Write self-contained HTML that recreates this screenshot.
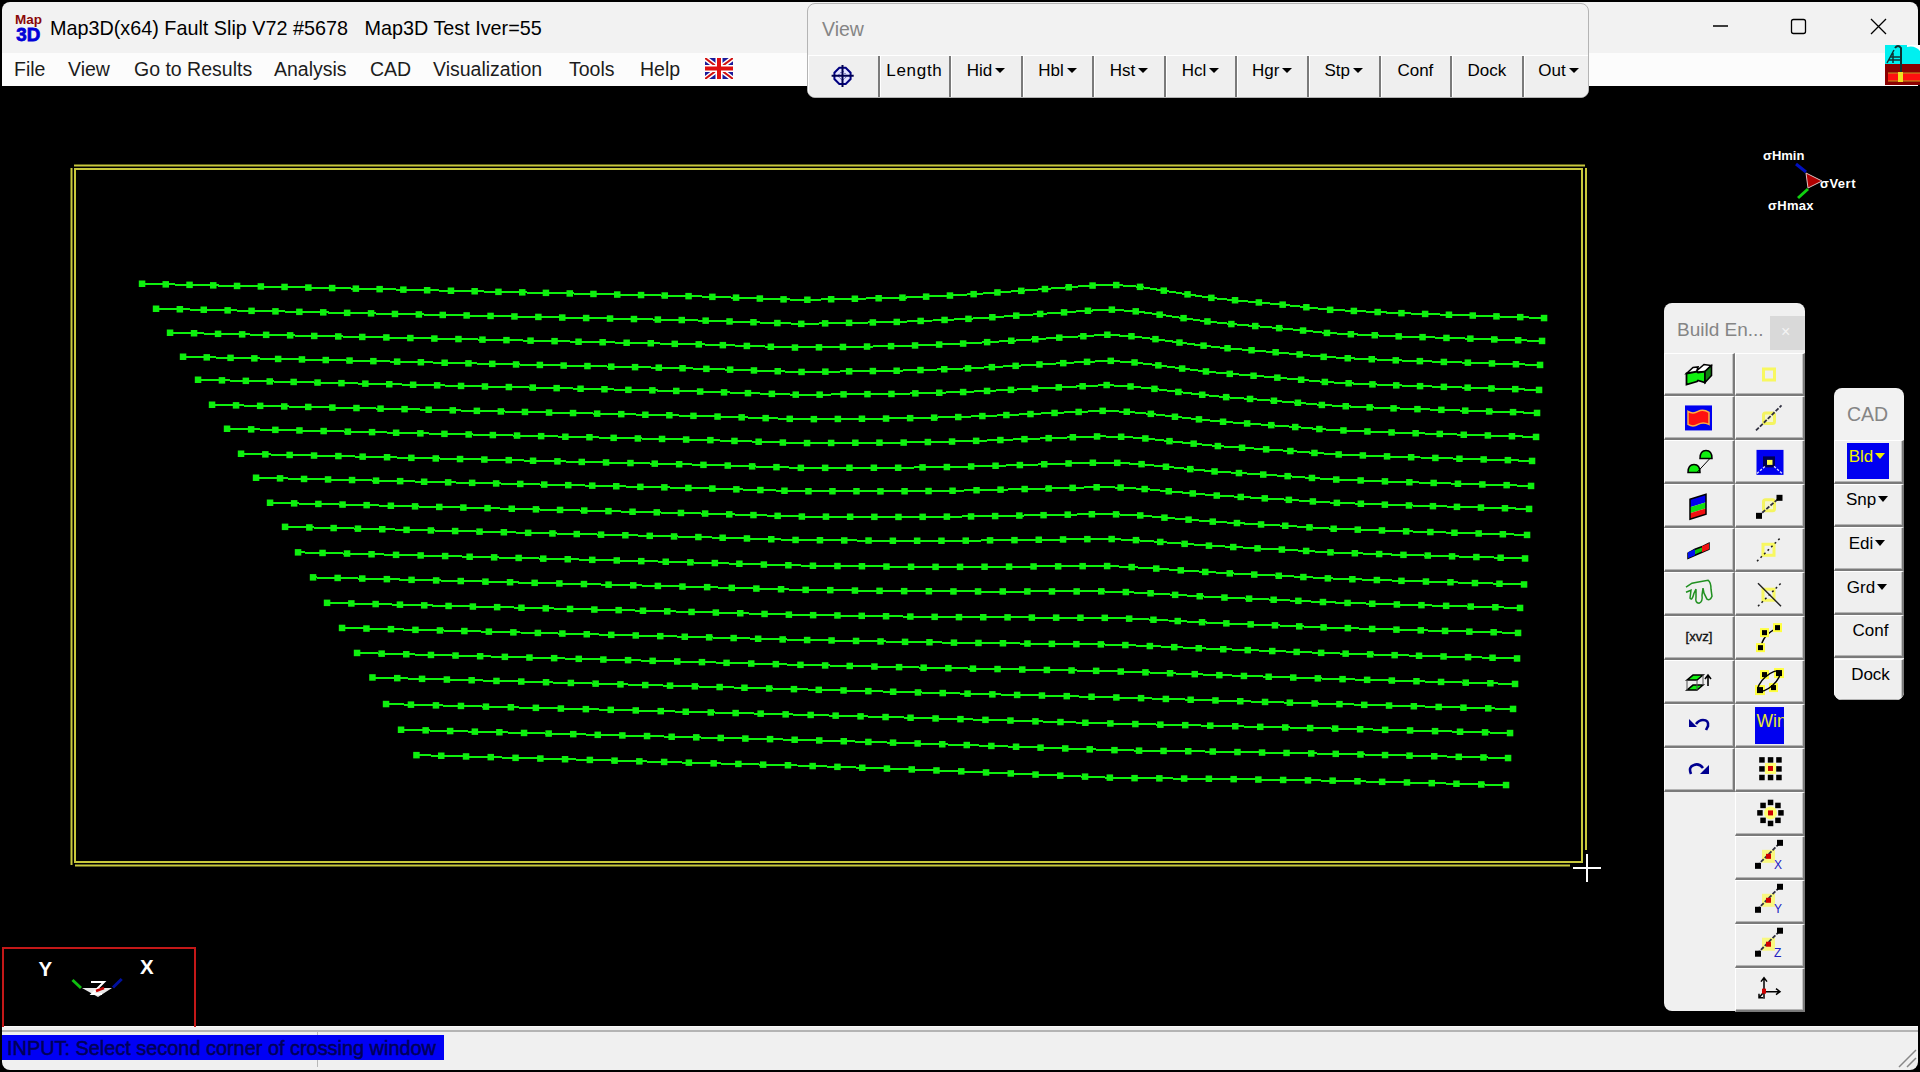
<!DOCTYPE html><html><head><meta charset="utf-8"><style>
*{margin:0;padding:0;box-sizing:border-box}
html,body{width:1920px;height:1072px;overflow:hidden;background:#000}
body{position:relative;font-family:"Liberation Sans", sans-serif}
.abs{position:absolute}
.t{position:absolute;white-space:nowrap;line-height:1}
.vb{position:absolute;top:55px;height:42px;width:71px;background:#efefef;border-top:1px solid #fff;border-left:1px solid #fff}
.vb:after{content:'';position:absolute;right:0;top:0;width:2px;height:100%;background:#7a7a7a}
.bb{position:absolute;width:70px;height:44px;background:#efefef;border-top:1px solid #fff;border-left:1px solid #fff;border-right:2px solid #7a7a7a;border-bottom:2px solid #7a7a7a;box-shadow:inset 0 -1px 0 #b4b4b4, inset -1px 0 0 #c4c4c4}
.tri{display:inline-block;width:0;height:0;border-left:5.75px solid transparent;border-right:5.75px solid transparent;border-top:6px solid #000;vertical-align:3px;margin-left:2px}
.trv{display:inline-block;width:0;height:0;border-left:5px solid transparent;border-right:5px solid transparent;border-top:5.5px solid #000;vertical-align:3px;margin-left:3px}
</style></head><body><div class="abs" style="left:2px;top:2px;width:1916px;height:1068px;border-radius:8px;background:#000;overflow:hidden"><div class="abs" style="left:0;top:0;width:1916px;height:51px;background:#f2f2f2"></div><div class="abs" style="left:0;top:51px;width:1916px;height:33px;background:#fcfcfc"></div><div class="abs" style="left:0;top:1024px;width:1916px;height:44px;background:#f0f0f0;border-top:1px solid #fafafa"></div><div class="abs" style="left:0;top:1028px;width:1916px;height:2px;background:#b4b4b4"></div></div><svg class="abs" style="left:0;top:0" width="60" height="50" font-family="Liberation Sans" font-weight="bold"><text x="15" y="23.7" font-size="13.7" fill="#8a0808" textLength="27" lengthAdjust="spacingAndGlyphs">Map</text><text x="16.3" y="40.5" font-size="19" fill="#0000d8" textLength="24" lengthAdjust="spacingAndGlyphs" stroke="#0000d8" stroke-width="0.8">3D</text></svg><div class="t" style="left:50.0px;top:18.8px;font-size:19.8px;color:#000;">Map3D(x64) Fault Slip V72 #5678&nbsp;&nbsp;&nbsp;Map3D Test Iver=55</div><svg class="abs" style="left:1690px;top:10px" width="220" height="36"><path d="M23,16 H38" stroke="#000" stroke-width="1.5"/><rect x="101.5" y="9.5" width="14" height="14" rx="2" fill="none" stroke="#000" stroke-width="1.3"/><path d="M181,9 L196,24 M196,9 L181,24" stroke="#000" stroke-width="1.3"/></svg><div class="t" style="left:14.0px;top:60.2px;font-size:19.5px;color:#1c1c1c;">File</div><div class="t" style="left:68.0px;top:60.2px;font-size:19.5px;color:#1c1c1c;">View</div><div class="t" style="left:134.0px;top:60.2px;font-size:19.5px;color:#1c1c1c;">Go to Results</div><div class="t" style="left:274.0px;top:60.2px;font-size:19.5px;color:#1c1c1c;">Analysis</div><div class="t" style="left:370.0px;top:60.2px;font-size:19.5px;color:#1c1c1c;">CAD</div><div class="t" style="left:433.0px;top:60.2px;font-size:19.5px;color:#1c1c1c;">Visualization</div><div class="t" style="left:569.0px;top:60.2px;font-size:19.5px;color:#1c1c1c;">Tools</div><div class="t" style="left:640.0px;top:60.2px;font-size:19.5px;color:#1c1c1c;">Help</div><svg class="abs" style="left:705px;top:58px" width="28" height="21" viewBox="0 0 28 21"><rect width="28" height="21" fill="#1a1a9a"/><path d="M0,0 L28,21 M28,0 L0,21" stroke="#fff" stroke-width="5"/><path d="M0,0 L28,21 M28,0 L0,21" stroke="#d01010" stroke-width="2"/><path d="M14,0 V21 M0,10.5 H28" stroke="#fff" stroke-width="7"/><path d="M14,0 V21 M0,10.5 H28" stroke="#e01010" stroke-width="4"/></svg><svg class="abs" style="left:1885px;top:45px" width="35" height="40" viewBox="0 0 35 40"><rect x="0" y="0" width="35" height="19" fill="#00f0f0"/><path d="M22,2 Q30,0 35,6 V0 H22Z" fill="#ffffff"/><rect x="0" y="19" width="35" height="21" fill="#8b0000"/><rect x="3" y="28" width="32" height="8" fill="#ff1010"/><path d="M3,28 H35 M3,36 H35" stroke="#c0a020" stroke-width="1"/><path d="M2,18 L9,5 M8,8 V18 M5,12 H15 M4,15 H15" stroke="#103030" stroke-width="1.5" fill="none"/><path d="M10,3 Q13,-1 16,3 V27" stroke="#103030" stroke-width="2" fill="none"/><rect x="13" y="27" width="5" height="10" fill="#f0e020"/></svg><svg width="1920" height="1072" style="position:absolute;left:0;top:0"><g fill="none" stroke="#0ef00e" stroke-width="2" shape-rendering="crispEdges"><polyline points="142.0,283.8 165.8,284.3 189.5,284.8 213.3,285.4 237.1,285.9 260.8,286.5 284.6,287.0 308.3,287.5 332.1,288.1 355.9,288.6 379.6,289.1 403.4,289.7 427.2,290.2 450.9,290.8 474.7,291.3 498.4,291.8 522.2,292.4 546.0,292.9 569.7,293.4 593.5,294.0 617.3,294.5 641.0,295.0 664.8,295.6 688.5,296.1 712.3,296.8 736.1,297.7 759.8,298.5 783.6,299.4 807.4,299.8 831.1,299.3 854.9,298.8 878.6,298.2 902.4,297.7 926.2,296.6 949.9,295.5 973.7,294.1 997.5,292.5 1021.2,290.8 1045.0,289.0 1068.7,287.2 1092.5,285.5 1116.3,285.0 1140.0,286.8 1163.8,290.7 1187.6,294.3 1211.3,297.9 1235.1,300.3 1258.8,302.5 1282.6,304.7 1306.4,307.2 1330.1,309.8 1353.9,310.9 1377.7,312.1 1401.4,313.2 1425.2,314.0 1448.9,314.8 1472.7,315.6 1496.5,316.4 1520.2,317.2 1544.0,318.0"/><polyline points="156.0,308.8 179.9,309.3 203.8,309.8 227.7,310.3 251.6,310.8 275.5,311.3 299.4,311.8 323.3,312.4 347.2,312.9 371.1,313.4 395.0,313.9 418.9,314.4 442.8,314.9 466.7,315.5 490.6,316.0 514.4,316.5 538.3,317.0 562.2,317.5 586.1,318.0 610.0,318.5 633.9,319.1 657.8,319.6 681.7,320.1 705.6,320.7 729.5,321.5 753.4,322.3 777.3,323.1 801.2,323.8 825.1,323.4 849.0,322.9 872.9,322.4 896.8,321.9 920.7,321.0 944.6,320.0 968.5,318.8 992.4,317.3 1016.3,315.7 1040.2,314.0 1064.1,312.3 1088.0,310.7 1111.9,309.7 1135.8,311.3 1159.7,314.6 1183.6,318.2 1207.4,321.5 1231.3,324.0 1255.2,326.1 1279.1,328.1 1303.0,330.5 1326.9,333.0 1350.8,334.2 1374.7,335.3 1398.6,336.4 1422.5,337.1 1446.4,337.9 1470.3,338.7 1494.2,339.4 1518.1,340.2 1542.0,341.0"/><polyline points="170.0,332.8 194.0,333.3 218.1,333.8 242.1,334.3 266.1,334.9 290.2,335.4 314.2,335.9 338.2,336.4 362.3,337.0 386.3,337.5 410.4,338.0 434.4,338.5 458.4,339.1 482.5,339.6 506.5,340.1 530.5,340.7 554.6,341.2 578.6,341.7 602.6,342.2 626.7,342.8 650.7,343.3 674.7,343.8 698.8,344.3 722.8,345.1 746.8,345.9 770.9,346.7 794.9,347.5 818.9,347.4 843.0,347.0 867.0,346.6 891.1,346.2 915.1,345.4 939.1,344.6 963.2,343.6 987.2,342.2 1011.2,340.8 1035.3,339.2 1059.3,337.7 1083.3,336.2 1107.4,334.7 1131.4,336.3 1155.4,339.1 1179.5,342.5 1203.5,345.7 1227.5,348.3 1251.6,350.3 1275.6,352.3 1299.6,354.5 1323.7,356.8 1347.7,358.2 1371.8,359.3 1395.8,360.3 1419.8,361.1 1443.9,361.9 1467.9,362.7 1491.9,363.4 1516.0,364.2 1540.0,365.0"/><polyline points="183.0,356.8 206.8,357.3 230.6,357.8 254.4,358.4 278.2,358.9 301.9,359.5 325.7,360.0 349.5,360.6 373.3,361.1 397.1,361.7 420.9,362.2 444.7,362.8 468.5,363.3 492.3,363.9 516.1,364.4 539.8,365.0 563.6,365.5 587.4,366.1 611.2,366.6 635.0,367.1 658.8,367.7 682.6,368.2 706.4,368.9 730.2,369.7 753.9,370.5 777.7,371.3 801.5,372.0 825.3,371.7 849.1,371.4 872.9,371.0 896.7,370.7 920.5,370.0 944.3,369.3 968.1,368.3 991.8,367.1 1015.6,365.8 1039.4,364.5 1063.2,363.1 1087.0,361.8 1110.8,360.9 1134.6,362.5 1158.4,365.3 1182.2,368.5 1205.9,371.5 1229.7,373.8 1253.5,375.7 1277.3,377.6 1301.1,379.8 1324.9,382.0 1348.7,383.3 1372.5,384.3 1396.3,385.3 1420.1,386.1 1443.8,386.9 1467.6,387.7 1491.4,388.4 1515.2,389.2 1539.0,390.0"/><polyline points="198.0,379.8 221.9,380.3 245.8,380.9 269.7,381.4 293.6,382.0 317.6,382.6 341.5,383.1 365.4,383.7 389.3,384.2 413.2,384.8 437.1,385.3 461.0,385.9 484.9,386.5 508.8,387.0 532.8,387.6 556.7,388.1 580.6,388.7 604.5,389.3 628.4,389.8 652.3,390.4 676.2,390.9 700.1,391.5 724.0,392.3 747.9,393.1 771.9,393.9 795.8,394.7 819.7,394.6 843.6,394.4 867.5,394.2 891.4,393.9 915.3,393.4 939.2,392.7 963.1,392.0 987.1,390.9 1011.0,389.8 1034.9,388.6 1058.8,387.4 1082.7,386.2 1106.6,385.1 1130.5,386.4 1154.4,388.9 1178.3,391.9 1202.2,394.8 1226.2,397.2 1250.1,399.0 1274.0,400.8 1297.9,402.8 1321.8,404.9 1345.7,406.3 1369.6,407.3 1393.5,408.3 1417.4,409.1 1441.4,409.9 1465.3,410.7 1489.2,411.4 1513.1,412.2 1537.0,412.9"/><polyline points="212.0,404.8 236.1,405.3 260.1,405.9 284.2,406.4 308.3,407.0 332.4,407.5 356.4,408.1 380.5,408.6 404.6,409.2 428.7,409.7 452.7,410.3 476.8,410.9 500.9,411.4 524.9,412.0 549.0,412.5 573.1,413.1 597.2,413.6 621.2,414.2 645.3,414.7 669.4,415.3 693.5,415.8 717.5,416.6 741.6,417.3 765.7,418.1 789.7,418.9 813.8,419.1 837.9,418.9 862.0,418.7 886.0,418.5 910.1,418.2 934.2,417.6 958.3,417.0 982.3,416.1 1006.4,415.1 1030.5,414.0 1054.5,412.9 1078.6,411.9 1102.7,410.9 1126.8,411.8 1150.8,413.9 1174.9,416.7 1199.0,419.4 1223.1,421.8 1247.1,423.5 1271.2,425.2 1295.3,427.0 1319.3,429.1 1343.4,430.5 1367.5,431.4 1391.6,432.4 1415.6,433.2 1439.7,434.0 1463.8,434.7 1487.9,435.5 1511.9,436.2 1536.0,436.9"/><polyline points="227.0,428.8 251.2,429.3 275.3,429.9 299.5,430.5 323.7,431.0 347.8,431.6 372.0,432.2 396.2,432.7 420.3,433.3 444.5,433.9 468.7,434.4 492.8,435.0 517.0,435.6 541.2,436.1 565.3,436.7 589.5,437.3 613.7,437.8 637.8,438.4 662.0,439.0 686.2,439.5 710.3,440.2 734.5,441.0 758.7,441.7 782.8,442.5 807.0,443.0 831.2,442.9 855.3,442.8 879.5,442.7 903.7,442.5 927.8,442.0 952.0,441.6 976.2,440.9 1000.3,440.0 1024.5,439.1 1048.7,438.2 1072.8,437.3 1097.0,436.4 1121.2,436.7 1145.3,438.4 1169.5,441.1 1193.7,443.7 1217.8,446.1 1242.0,447.7 1266.2,449.3 1290.3,451.0 1314.5,452.9 1338.7,454.5 1362.8,455.4 1387.0,456.4 1411.2,457.2 1435.3,458.0 1459.5,458.7 1483.7,459.4 1507.8,460.2 1532.0,460.9"/><polyline points="241.0,453.8 265.3,454.4 289.7,454.9 314.0,455.5 338.4,456.1 362.7,456.7 387.0,457.3 411.4,457.8 435.7,458.4 460.1,459.0 484.4,459.6 508.7,460.2 533.1,460.7 557.4,461.3 581.8,461.9 606.1,462.5 630.4,463.1 654.8,463.6 679.1,464.2 703.5,464.8 727.8,465.6 752.1,466.4 776.5,467.1 800.8,467.9 825.2,467.8 849.5,467.8 873.8,467.7 898.2,467.7 922.5,467.4 946.8,467.0 971.2,466.5 995.5,465.8 1019.9,465.1 1044.2,464.3 1068.5,463.5 1092.9,462.8 1117.2,462.8 1141.6,464.2 1165.9,466.7 1190.2,469.1 1214.6,471.5 1238.9,473.0 1263.3,474.6 1287.6,476.2 1311.9,478.0 1336.3,479.5 1360.6,480.5 1385.0,481.4 1409.3,482.2 1433.6,483.0 1458.0,483.7 1482.3,484.5 1506.7,485.2 1531.0,485.9"/><polyline points="256.0,477.8 280.0,478.3 304.0,478.9 328.1,479.5 352.1,480.0 376.1,480.6 400.1,481.2 424.1,481.7 448.2,482.3 472.2,482.9 496.2,483.4 520.2,484.0 544.2,484.6 568.2,485.1 592.3,485.7 616.3,486.3 640.3,486.8 664.3,487.4 688.3,487.9 712.4,488.6 736.4,489.3 760.4,490.0 784.4,490.8 808.4,491.3 832.5,491.3 856.5,491.3 880.5,491.3 904.5,491.3 928.5,491.0 952.5,490.7 976.6,490.3 1000.6,489.7 1024.6,489.1 1048.6,488.4 1072.6,487.8 1096.7,487.2 1120.7,487.6 1144.7,489.0 1168.7,491.3 1192.7,493.4 1216.8,495.5 1240.8,496.9 1264.8,498.4 1288.8,499.8 1312.8,501.5 1336.8,502.9 1360.9,503.7 1384.9,504.6 1408.9,505.4 1432.9,506.1 1456.9,506.8 1481.0,507.5 1505.0,508.2 1529.0,508.9"/><polyline points="270.0,502.8 294.2,503.4 318.3,504.0 342.5,504.6 366.7,505.2 390.9,505.8 415.0,506.4 439.2,507.0 463.4,507.6 487.6,508.2 511.7,508.8 535.9,509.4 560.1,510.0 584.2,510.6 608.4,511.2 632.6,511.8 656.8,512.4 680.9,513.0 705.1,513.6 729.3,514.3 753.5,515.1 777.6,515.8 801.8,516.5 826.0,516.6 850.2,516.7 874.3,516.8 898.5,517.0 922.7,516.8 946.8,516.7 971.0,516.4 995.2,516.0 1019.4,515.6 1043.5,515.1 1067.7,514.7 1091.9,514.2 1116.1,514.3 1140.2,515.5 1164.4,517.6 1188.6,519.7 1212.8,521.6 1236.9,523.1 1261.1,524.4 1285.3,525.8 1309.4,527.3 1333.6,528.8 1357.8,529.6 1382.0,530.5 1406.1,531.3 1430.3,532.0 1454.5,532.8 1478.7,533.5 1502.8,534.2 1527.0,534.9"/><polyline points="285.0,526.8 309.3,527.4 333.6,528.0 357.9,528.6 382.3,529.2 406.6,529.8 430.9,530.4 455.2,531.0 479.5,531.6 503.8,532.2 528.1,532.8 552.5,533.4 576.8,534.0 601.1,534.6 625.4,535.2 649.7,535.8 674.0,536.4 698.3,537.1 722.6,537.8 747.0,538.5 771.3,539.2 795.6,540.0 819.9,540.2 844.2,540.4 868.5,540.6 892.8,540.8 917.2,540.8 941.5,540.8 965.8,540.7 990.1,540.4 1014.4,540.1 1038.7,539.8 1063.0,539.5 1087.4,539.2 1111.7,539.1 1136.0,540.2 1160.3,542.0 1184.6,543.8 1208.9,545.6 1233.2,547.0 1257.5,548.3 1281.9,549.6 1306.2,551.0 1330.5,552.4 1354.8,553.2 1379.1,554.1 1403.4,554.9 1427.7,555.6 1452.1,556.3 1476.4,557.0 1500.7,557.7 1525.0,558.4"/><polyline points="298.0,552.3 322.5,553.0 347.0,553.6 371.6,554.2 396.1,554.8 420.6,555.5 445.1,556.1 469.6,556.7 494.2,557.4 518.7,558.0 543.2,558.6 567.7,559.2 592.2,559.9 616.8,560.5 641.3,561.1 665.8,561.7 690.3,562.4 714.8,563.1 739.4,563.8 763.9,564.5 788.4,565.3 812.9,565.7 837.4,566.0 862.0,566.3 886.5,566.5 911.0,566.7 935.5,566.8 960.0,566.9 984.6,566.8 1009.1,566.7 1033.6,566.5 1058.1,566.3 1082.6,566.2 1107.2,566.0 1131.7,567.1 1156.2,568.6 1180.7,570.3 1205.2,571.9 1229.8,573.3 1254.3,574.5 1278.8,575.7 1303.3,577.0 1327.8,578.3 1352.4,579.2 1376.9,580.0 1401.4,580.8 1425.9,581.6 1450.4,582.3 1475.0,583.0 1499.5,583.7 1524.0,584.4"/><polyline points="313.0,577.4 337.6,578.0 362.3,578.6 386.9,579.2 411.5,579.8 436.2,580.4 460.8,581.0 485.4,581.6 510.1,582.3 534.7,582.9 559.3,583.5 584.0,584.1 608.6,584.7 633.2,585.3 657.9,585.9 682.5,586.5 707.1,587.2 731.8,587.9 756.4,588.6 781.0,589.3 805.7,589.9 830.3,590.2 854.9,590.5 879.6,590.8 904.2,591.1 928.8,591.3 953.4,591.4 978.1,591.5 1002.7,591.5 1027.3,591.5 1052.0,591.4 1076.6,591.4 1101.2,591.4 1125.9,592.1 1150.5,593.3 1175.1,594.8 1199.8,596.3 1224.4,597.6 1249.0,598.7 1273.7,599.7 1298.3,600.9 1322.9,602.1 1347.6,602.9 1372.2,603.7 1396.8,604.5 1421.5,605.2 1446.1,605.9 1470.7,606.6 1495.4,607.3 1520.0,607.9"/><polyline points="327.0,602.9 351.3,603.5 375.6,604.1 399.9,604.7 424.2,605.3 448.5,605.9 472.8,606.5 497.1,607.1 521.4,607.7 545.8,608.3 570.1,608.9 594.4,609.5 618.7,610.1 643.0,610.7 667.3,611.3 691.6,611.9 715.9,612.6 740.2,613.3 764.5,613.9 788.8,614.6 813.1,615.1 837.4,615.5 861.7,615.9 886.0,616.3 910.3,616.6 934.7,616.8 959.0,617.1 983.3,617.3 1007.6,617.4 1031.9,617.5 1056.2,617.6 1080.5,617.7 1104.8,617.9 1129.1,618.6 1153.4,619.7 1177.7,621.0 1202.0,622.3 1226.3,623.4 1250.6,624.4 1274.9,625.3 1299.2,626.3 1323.6,627.4 1347.9,628.2 1372.2,628.9 1396.5,629.6 1420.8,630.3 1445.1,631.0 1469.4,631.6 1493.7,632.3 1518.0,632.9"/><polyline points="342.0,627.9 366.5,628.5 391.0,629.2 415.4,629.8 439.9,630.4 464.4,631.1 488.9,631.7 513.4,632.3 537.8,633.0 562.3,633.6 586.8,634.2 611.3,634.8 635.8,635.5 660.2,636.1 684.7,636.7 709.2,637.4 733.7,638.1 758.1,638.7 782.6,639.4 807.1,640.0 831.6,640.5 856.1,641.0 880.5,641.4 905.0,641.9 929.5,642.3 954.0,642.7 978.5,643.0 1002.9,643.3 1027.4,643.6 1051.9,643.8 1076.4,644.1 1100.9,644.4 1125.3,645.1 1149.8,646.0 1174.3,647.1 1198.8,648.2 1223.2,649.2 1247.7,650.1 1272.2,651.0 1296.7,651.9 1321.2,652.9 1345.6,653.7 1370.1,654.4 1394.6,655.1 1419.1,655.8 1443.6,656.5 1468.0,657.1 1492.5,657.8 1517.0,658.5"/><polyline points="357.0,652.9 381.6,653.6 406.3,654.3 430.9,654.9 455.6,655.6 480.2,656.2 504.8,656.9 529.5,657.5 554.1,658.2 578.7,658.9 603.4,659.5 628.0,660.2 652.7,660.8 677.3,661.5 701.9,662.1 726.6,662.8 751.2,663.5 775.9,664.2 800.5,664.9 825.1,665.4 849.8,666.0 874.4,666.6 899.0,667.1 923.7,667.6 948.3,668.1 973.0,668.6 997.6,669.1 1022.2,669.5 1046.9,670.0 1071.5,670.4 1096.1,670.9 1120.8,671.5 1145.4,672.3 1170.1,673.3 1194.7,674.2 1219.3,675.1 1244.0,675.9 1268.6,676.7 1293.3,677.5 1317.9,678.4 1342.5,679.1 1367.2,679.9 1391.8,680.6 1416.4,681.3 1441.1,681.9 1465.7,682.6 1490.4,683.3 1515.0,684.0"/><polyline points="372.5,677.5 397.3,678.2 422.1,678.9 446.9,679.5 471.7,680.2 496.5,680.9 521.3,681.6 546.1,682.3 570.8,683.0 595.6,683.6 620.4,684.3 645.2,685.0 670.0,685.7 694.8,686.4 719.6,687.1 744.4,687.8 769.2,688.4 794.0,689.1 818.8,689.8 843.6,690.5 868.4,691.1 893.2,691.8 918.0,692.4 942.8,693.1 967.5,693.7 992.3,694.3 1017.1,694.9 1041.9,695.6 1066.7,696.2 1091.5,696.8 1116.3,697.5 1141.1,698.2 1165.9,698.9 1190.7,699.7 1215.5,700.5 1240.3,701.2 1265.1,701.9 1289.9,702.7 1314.7,703.4 1339.4,704.1 1364.2,704.8 1389.0,705.5 1413.8,706.2 1438.6,706.9 1463.4,707.6 1488.2,708.3 1513.0,709.0"/><polyline points="386.0,704.0 411.0,704.7 436.0,705.3 460.9,706.0 485.9,706.6 510.9,707.3 535.9,707.9 560.8,708.5 585.8,709.2 610.8,709.8 635.8,710.5 660.8,711.1 685.7,711.8 710.7,712.4 735.7,713.0 760.7,713.7 785.6,714.3 810.6,715.0 835.6,715.7 860.6,716.3 885.6,717.0 910.5,717.7 935.5,718.4 960.5,719.1 985.5,719.9 1010.4,720.6 1035.4,721.3 1060.4,722.0 1085.4,722.8 1110.4,723.5 1135.3,724.1 1160.3,724.6 1185.3,725.2 1210.3,725.7 1235.2,726.3 1260.2,726.9 1285.2,727.4 1310.2,728.0 1335.2,728.6 1360.1,729.2 1385.1,729.8 1410.1,730.5 1435.1,731.1 1460.0,731.7 1485.0,732.4 1510.0,733.0"/><polyline points="401.0,729.8 425.6,730.4 450.2,731.0 474.8,731.7 499.4,732.3 524.0,732.9 548.6,733.6 573.2,734.2 597.8,734.8 622.4,735.5 647.0,736.1 671.6,736.7 696.2,737.4 720.8,738.0 745.4,738.6 770.0,739.2 794.6,739.8 819.2,740.5 843.8,741.2 868.4,741.9 893.0,742.7 917.6,743.5 942.2,744.3 966.8,745.1 991.4,745.9 1016.0,746.8 1040.6,747.6 1065.2,748.5 1089.8,749.3 1114.4,750.1 1139.0,750.6 1163.6,750.9 1188.2,751.3 1212.8,751.6 1237.4,752.0 1262.0,752.5 1286.6,753.0 1311.2,753.4 1335.8,753.9 1360.4,754.4 1385.0,755.0 1409.6,755.6 1434.2,756.2 1458.8,756.8 1483.4,757.4 1508.0,758.0"/><polyline points="416.5,755.1 441.3,755.8 466.0,756.5 490.8,757.2 515.5,757.9 540.3,758.5 565.1,759.2 589.8,759.9 614.6,760.6 639.4,761.3 664.1,762.0 688.9,762.7 713.6,763.3 738.4,764.0 763.2,764.6 787.9,765.2 812.7,766.0 837.4,766.9 862.2,767.7 887.0,768.6 911.7,769.5 936.5,770.4 961.2,771.4 986.0,772.4 1010.8,773.5 1035.5,774.5 1060.3,775.6 1085.1,776.7 1109.8,777.7 1134.6,778.2 1159.3,778.4 1184.1,778.6 1208.9,778.8 1233.6,779.1 1258.4,779.5 1283.1,780.0 1307.9,780.3 1332.7,780.7 1357.4,781.3 1382.2,781.9 1407.0,782.5 1431.7,783.1 1456.5,783.8 1481.2,784.4 1506.0,785.1"/></g><g fill="#0ef00e"><rect x="138.8" y="280.5" width="6.5" height="6.5"/><rect x="162.5" y="281.1" width="6.5" height="6.5"/><rect x="186.3" y="281.6" width="6.5" height="6.5"/><rect x="210.0" y="282.1" width="6.5" height="6.5"/><rect x="233.8" y="282.7" width="6.5" height="6.5"/><rect x="257.6" y="283.2" width="6.5" height="6.5"/><rect x="281.3" y="283.7" width="6.5" height="6.5"/><rect x="305.1" y="284.3" width="6.5" height="6.5"/><rect x="328.9" y="284.8" width="6.5" height="6.5"/><rect x="352.6" y="285.4" width="6.5" height="6.5"/><rect x="376.4" y="285.9" width="6.5" height="6.5"/><rect x="400.1" y="286.4" width="6.5" height="6.5"/><rect x="423.9" y="287.0" width="6.5" height="6.5"/><rect x="447.7" y="287.5" width="6.5" height="6.5"/><rect x="471.4" y="288.0" width="6.5" height="6.5"/><rect x="495.2" y="288.6" width="6.5" height="6.5"/><rect x="519.0" y="289.1" width="6.5" height="6.5"/><rect x="542.7" y="289.6" width="6.5" height="6.5"/><rect x="566.5" y="290.2" width="6.5" height="6.5"/><rect x="590.2" y="290.7" width="6.5" height="6.5"/><rect x="614.0" y="291.3" width="6.5" height="6.5"/><rect x="637.8" y="291.8" width="6.5" height="6.5"/><rect x="661.5" y="292.3" width="6.5" height="6.5"/><rect x="685.3" y="292.9" width="6.5" height="6.5"/><rect x="709.1" y="293.6" width="6.5" height="6.5"/><rect x="732.8" y="294.4" width="6.5" height="6.5"/><rect x="756.6" y="295.3" width="6.5" height="6.5"/><rect x="780.3" y="296.1" width="6.5" height="6.5"/><rect x="804.1" y="296.5" width="6.5" height="6.5"/><rect x="827.9" y="296.0" width="6.5" height="6.5"/><rect x="851.6" y="295.5" width="6.5" height="6.5"/><rect x="875.4" y="295.0" width="6.5" height="6.5"/><rect x="899.2" y="294.4" width="6.5" height="6.5"/><rect x="922.9" y="293.4" width="6.5" height="6.5"/><rect x="946.7" y="292.3" width="6.5" height="6.5"/><rect x="970.4" y="290.9" width="6.5" height="6.5"/><rect x="994.2" y="289.2" width="6.5" height="6.5"/><rect x="1018.0" y="287.6" width="6.5" height="6.5"/><rect x="1041.7" y="285.8" width="6.5" height="6.5"/><rect x="1065.5" y="284.0" width="6.5" height="6.5"/><rect x="1089.3" y="282.3" width="6.5" height="6.5"/><rect x="1113.0" y="281.8" width="6.5" height="6.5"/><rect x="1136.8" y="283.6" width="6.5" height="6.5"/><rect x="1160.5" y="287.4" width="6.5" height="6.5"/><rect x="1184.3" y="291.1" width="6.5" height="6.5"/><rect x="1208.1" y="294.6" width="6.5" height="6.5"/><rect x="1231.8" y="297.0" width="6.5" height="6.5"/><rect x="1255.6" y="299.2" width="6.5" height="6.5"/><rect x="1279.4" y="301.4" width="6.5" height="6.5"/><rect x="1303.1" y="304.0" width="6.5" height="6.5"/><rect x="1326.9" y="306.6" width="6.5" height="6.5"/><rect x="1350.6" y="307.7" width="6.5" height="6.5"/><rect x="1374.4" y="308.8" width="6.5" height="6.5"/><rect x="1398.2" y="309.9" width="6.5" height="6.5"/><rect x="1421.9" y="310.7" width="6.5" height="6.5"/><rect x="1445.7" y="311.5" width="6.5" height="6.5"/><rect x="1469.5" y="312.3" width="6.5" height="6.5"/><rect x="1493.2" y="313.1" width="6.5" height="6.5"/><rect x="1517.0" y="313.9" width="6.5" height="6.5"/><rect x="1540.8" y="314.8" width="6.5" height="6.5"/><rect x="152.8" y="305.5" width="6.5" height="6.5"/><rect x="176.6" y="306.0" width="6.5" height="6.5"/><rect x="200.5" y="306.5" width="6.5" height="6.5"/><rect x="224.4" y="307.1" width="6.5" height="6.5"/><rect x="248.3" y="307.6" width="6.5" height="6.5"/><rect x="272.2" y="308.1" width="6.5" height="6.5"/><rect x="296.1" y="308.6" width="6.5" height="6.5"/><rect x="320.0" y="309.1" width="6.5" height="6.5"/><rect x="343.9" y="309.6" width="6.5" height="6.5"/><rect x="367.8" y="310.1" width="6.5" height="6.5"/><rect x="391.7" y="310.7" width="6.5" height="6.5"/><rect x="415.6" y="311.2" width="6.5" height="6.5"/><rect x="439.5" y="311.7" width="6.5" height="6.5"/><rect x="463.4" y="312.2" width="6.5" height="6.5"/><rect x="487.3" y="312.7" width="6.5" height="6.5"/><rect x="511.2" y="313.2" width="6.5" height="6.5"/><rect x="535.1" y="313.7" width="6.5" height="6.5"/><rect x="559.0" y="314.3" width="6.5" height="6.5"/><rect x="582.9" y="314.8" width="6.5" height="6.5"/><rect x="606.8" y="315.3" width="6.5" height="6.5"/><rect x="630.7" y="315.8" width="6.5" height="6.5"/><rect x="654.6" y="316.3" width="6.5" height="6.5"/><rect x="678.5" y="316.8" width="6.5" height="6.5"/><rect x="702.4" y="317.4" width="6.5" height="6.5"/><rect x="726.3" y="318.2" width="6.5" height="6.5"/><rect x="750.2" y="319.0" width="6.5" height="6.5"/><rect x="774.1" y="319.8" width="6.5" height="6.5"/><rect x="798.0" y="320.6" width="6.5" height="6.5"/><rect x="821.9" y="320.1" width="6.5" height="6.5"/><rect x="845.8" y="319.6" width="6.5" height="6.5"/><rect x="869.6" y="319.2" width="6.5" height="6.5"/><rect x="893.5" y="318.7" width="6.5" height="6.5"/><rect x="917.4" y="317.7" width="6.5" height="6.5"/><rect x="941.3" y="316.7" width="6.5" height="6.5"/><rect x="965.2" y="315.6" width="6.5" height="6.5"/><rect x="989.1" y="314.0" width="6.5" height="6.5"/><rect x="1013.0" y="312.4" width="6.5" height="6.5"/><rect x="1036.9" y="310.7" width="6.5" height="6.5"/><rect x="1060.8" y="309.1" width="6.5" height="6.5"/><rect x="1084.7" y="307.5" width="6.5" height="6.5"/><rect x="1108.6" y="306.4" width="6.5" height="6.5"/><rect x="1132.5" y="308.1" width="6.5" height="6.5"/><rect x="1156.4" y="311.4" width="6.5" height="6.5"/><rect x="1180.3" y="314.9" width="6.5" height="6.5"/><rect x="1204.2" y="318.2" width="6.5" height="6.5"/><rect x="1228.1" y="320.8" width="6.5" height="6.5"/><rect x="1252.0" y="322.8" width="6.5" height="6.5"/><rect x="1275.9" y="324.9" width="6.5" height="6.5"/><rect x="1299.8" y="327.3" width="6.5" height="6.5"/><rect x="1323.7" y="329.7" width="6.5" height="6.5"/><rect x="1347.6" y="331.0" width="6.5" height="6.5"/><rect x="1371.5" y="332.0" width="6.5" height="6.5"/><rect x="1395.4" y="333.1" width="6.5" height="6.5"/><rect x="1419.3" y="333.9" width="6.5" height="6.5"/><rect x="1443.2" y="334.7" width="6.5" height="6.5"/><rect x="1467.1" y="335.4" width="6.5" height="6.5"/><rect x="1491.0" y="336.2" width="6.5" height="6.5"/><rect x="1514.9" y="337.0" width="6.5" height="6.5"/><rect x="1538.8" y="337.7" width="6.5" height="6.5"/><rect x="166.8" y="329.5" width="6.5" height="6.5"/><rect x="190.8" y="330.0" width="6.5" height="6.5"/><rect x="214.8" y="330.6" width="6.5" height="6.5"/><rect x="238.9" y="331.1" width="6.5" height="6.5"/><rect x="262.9" y="331.6" width="6.5" height="6.5"/><rect x="286.9" y="332.1" width="6.5" height="6.5"/><rect x="311.0" y="332.7" width="6.5" height="6.5"/><rect x="335.0" y="333.2" width="6.5" height="6.5"/><rect x="359.0" y="333.7" width="6.5" height="6.5"/><rect x="383.1" y="334.2" width="6.5" height="6.5"/><rect x="407.1" y="334.8" width="6.5" height="6.5"/><rect x="431.1" y="335.3" width="6.5" height="6.5"/><rect x="455.2" y="335.8" width="6.5" height="6.5"/><rect x="479.2" y="336.4" width="6.5" height="6.5"/><rect x="503.2" y="336.9" width="6.5" height="6.5"/><rect x="527.3" y="337.4" width="6.5" height="6.5"/><rect x="551.3" y="337.9" width="6.5" height="6.5"/><rect x="575.3" y="338.5" width="6.5" height="6.5"/><rect x="599.4" y="339.0" width="6.5" height="6.5"/><rect x="623.4" y="339.5" width="6.5" height="6.5"/><rect x="647.5" y="340.0" width="6.5" height="6.5"/><rect x="671.5" y="340.6" width="6.5" height="6.5"/><rect x="695.5" y="341.1" width="6.5" height="6.5"/><rect x="719.6" y="341.9" width="6.5" height="6.5"/><rect x="743.6" y="342.7" width="6.5" height="6.5"/><rect x="767.6" y="343.5" width="6.5" height="6.5"/><rect x="791.7" y="344.3" width="6.5" height="6.5"/><rect x="815.7" y="344.1" width="6.5" height="6.5"/><rect x="839.7" y="343.7" width="6.5" height="6.5"/><rect x="863.8" y="343.3" width="6.5" height="6.5"/><rect x="887.8" y="342.9" width="6.5" height="6.5"/><rect x="911.8" y="342.2" width="6.5" height="6.5"/><rect x="935.9" y="341.3" width="6.5" height="6.5"/><rect x="959.9" y="340.3" width="6.5" height="6.5"/><rect x="983.9" y="338.9" width="6.5" height="6.5"/><rect x="1008.0" y="337.5" width="6.5" height="6.5"/><rect x="1032.0" y="336.0" width="6.5" height="6.5"/><rect x="1056.0" y="334.4" width="6.5" height="6.5"/><rect x="1080.1" y="333.0" width="6.5" height="6.5"/><rect x="1104.1" y="331.5" width="6.5" height="6.5"/><rect x="1128.2" y="333.0" width="6.5" height="6.5"/><rect x="1152.2" y="335.9" width="6.5" height="6.5"/><rect x="1176.2" y="339.3" width="6.5" height="6.5"/><rect x="1200.3" y="342.4" width="6.5" height="6.5"/><rect x="1224.3" y="345.0" width="6.5" height="6.5"/><rect x="1248.3" y="347.0" width="6.5" height="6.5"/><rect x="1272.4" y="349.0" width="6.5" height="6.5"/><rect x="1296.4" y="351.2" width="6.5" height="6.5"/><rect x="1320.4" y="353.6" width="6.5" height="6.5"/><rect x="1344.5" y="355.0" width="6.5" height="6.5"/><rect x="1368.5" y="356.0" width="6.5" height="6.5"/><rect x="1392.5" y="357.1" width="6.5" height="6.5"/><rect x="1416.6" y="357.9" width="6.5" height="6.5"/><rect x="1440.6" y="358.7" width="6.5" height="6.5"/><rect x="1464.6" y="359.4" width="6.5" height="6.5"/><rect x="1488.7" y="360.2" width="6.5" height="6.5"/><rect x="1512.7" y="361.0" width="6.5" height="6.5"/><rect x="1536.8" y="361.7" width="6.5" height="6.5"/><rect x="179.8" y="353.5" width="6.5" height="6.5"/><rect x="203.5" y="354.1" width="6.5" height="6.5"/><rect x="227.3" y="354.6" width="6.5" height="6.5"/><rect x="251.1" y="355.1" width="6.5" height="6.5"/><rect x="274.9" y="355.7" width="6.5" height="6.5"/><rect x="298.7" y="356.2" width="6.5" height="6.5"/><rect x="322.5" y="356.8" width="6.5" height="6.5"/><rect x="346.3" y="357.3" width="6.5" height="6.5"/><rect x="370.1" y="357.9" width="6.5" height="6.5"/><rect x="393.9" y="358.4" width="6.5" height="6.5"/><rect x="417.6" y="359.0" width="6.5" height="6.5"/><rect x="441.4" y="359.5" width="6.5" height="6.5"/><rect x="465.2" y="360.1" width="6.5" height="6.5"/><rect x="489.0" y="360.6" width="6.5" height="6.5"/><rect x="512.8" y="361.2" width="6.5" height="6.5"/><rect x="536.6" y="361.7" width="6.5" height="6.5"/><rect x="560.4" y="362.3" width="6.5" height="6.5"/><rect x="584.2" y="362.8" width="6.5" height="6.5"/><rect x="608.0" y="363.4" width="6.5" height="6.5"/><rect x="631.8" y="363.9" width="6.5" height="6.5"/><rect x="655.5" y="364.4" width="6.5" height="6.5"/><rect x="679.3" y="365.0" width="6.5" height="6.5"/><rect x="703.1" y="365.6" width="6.5" height="6.5"/><rect x="726.9" y="366.4" width="6.5" height="6.5"/><rect x="750.7" y="367.2" width="6.5" height="6.5"/><rect x="774.5" y="368.0" width="6.5" height="6.5"/><rect x="798.3" y="368.7" width="6.5" height="6.5"/><rect x="822.1" y="368.4" width="6.5" height="6.5"/><rect x="845.9" y="368.1" width="6.5" height="6.5"/><rect x="869.6" y="367.8" width="6.5" height="6.5"/><rect x="893.4" y="367.5" width="6.5" height="6.5"/><rect x="917.2" y="366.8" width="6.5" height="6.5"/><rect x="941.0" y="366.0" width="6.5" height="6.5"/><rect x="964.8" y="365.1" width="6.5" height="6.5"/><rect x="988.6" y="363.9" width="6.5" height="6.5"/><rect x="1012.4" y="362.6" width="6.5" height="6.5"/><rect x="1036.2" y="361.2" width="6.5" height="6.5"/><rect x="1060.0" y="359.9" width="6.5" height="6.5"/><rect x="1083.8" y="358.6" width="6.5" height="6.5"/><rect x="1107.5" y="357.6" width="6.5" height="6.5"/><rect x="1131.3" y="359.2" width="6.5" height="6.5"/><rect x="1155.1" y="362.1" width="6.5" height="6.5"/><rect x="1178.9" y="365.3" width="6.5" height="6.5"/><rect x="1202.7" y="368.2" width="6.5" height="6.5"/><rect x="1226.5" y="370.6" width="6.5" height="6.5"/><rect x="1250.3" y="372.5" width="6.5" height="6.5"/><rect x="1274.1" y="374.4" width="6.5" height="6.5"/><rect x="1297.9" y="376.5" width="6.5" height="6.5"/><rect x="1321.6" y="378.7" width="6.5" height="6.5"/><rect x="1345.4" y="380.0" width="6.5" height="6.5"/><rect x="1369.2" y="381.1" width="6.5" height="6.5"/><rect x="1393.0" y="382.1" width="6.5" height="6.5"/><rect x="1416.8" y="382.9" width="6.5" height="6.5"/><rect x="1440.6" y="383.6" width="6.5" height="6.5"/><rect x="1464.4" y="384.4" width="6.5" height="6.5"/><rect x="1488.2" y="385.2" width="6.5" height="6.5"/><rect x="1512.0" y="385.9" width="6.5" height="6.5"/><rect x="1535.8" y="386.7" width="6.5" height="6.5"/><rect x="194.8" y="376.5" width="6.5" height="6.5"/><rect x="218.7" y="377.1" width="6.5" height="6.5"/><rect x="242.6" y="377.6" width="6.5" height="6.5"/><rect x="266.5" y="378.2" width="6.5" height="6.5"/><rect x="290.4" y="378.7" width="6.5" height="6.5"/><rect x="314.3" y="379.3" width="6.5" height="6.5"/><rect x="338.2" y="379.9" width="6.5" height="6.5"/><rect x="362.1" y="380.4" width="6.5" height="6.5"/><rect x="386.0" y="381.0" width="6.5" height="6.5"/><rect x="409.9" y="381.5" width="6.5" height="6.5"/><rect x="433.9" y="382.1" width="6.5" height="6.5"/><rect x="457.8" y="382.7" width="6.5" height="6.5"/><rect x="481.7" y="383.2" width="6.5" height="6.5"/><rect x="505.6" y="383.8" width="6.5" height="6.5"/><rect x="529.5" y="384.3" width="6.5" height="6.5"/><rect x="553.4" y="384.9" width="6.5" height="6.5"/><rect x="577.3" y="385.5" width="6.5" height="6.5"/><rect x="601.2" y="386.0" width="6.5" height="6.5"/><rect x="625.1" y="386.6" width="6.5" height="6.5"/><rect x="649.1" y="387.1" width="6.5" height="6.5"/><rect x="673.0" y="387.7" width="6.5" height="6.5"/><rect x="696.9" y="388.3" width="6.5" height="6.5"/><rect x="720.8" y="389.1" width="6.5" height="6.5"/><rect x="744.7" y="389.9" width="6.5" height="6.5"/><rect x="768.6" y="390.6" width="6.5" height="6.5"/><rect x="792.5" y="391.4" width="6.5" height="6.5"/><rect x="816.4" y="391.4" width="6.5" height="6.5"/><rect x="840.3" y="391.1" width="6.5" height="6.5"/><rect x="864.2" y="390.9" width="6.5" height="6.5"/><rect x="888.2" y="390.7" width="6.5" height="6.5"/><rect x="912.1" y="390.1" width="6.5" height="6.5"/><rect x="936.0" y="389.5" width="6.5" height="6.5"/><rect x="959.9" y="388.8" width="6.5" height="6.5"/><rect x="983.8" y="387.7" width="6.5" height="6.5"/><rect x="1007.7" y="386.6" width="6.5" height="6.5"/><rect x="1031.6" y="385.4" width="6.5" height="6.5"/><rect x="1055.5" y="384.1" width="6.5" height="6.5"/><rect x="1079.4" y="383.0" width="6.5" height="6.5"/><rect x="1103.4" y="381.8" width="6.5" height="6.5"/><rect x="1127.3" y="383.2" width="6.5" height="6.5"/><rect x="1151.2" y="385.6" width="6.5" height="6.5"/><rect x="1175.1" y="388.7" width="6.5" height="6.5"/><rect x="1199.0" y="391.5" width="6.5" height="6.5"/><rect x="1222.9" y="393.9" width="6.5" height="6.5"/><rect x="1246.8" y="395.7" width="6.5" height="6.5"/><rect x="1270.7" y="397.5" width="6.5" height="6.5"/><rect x="1294.6" y="399.5" width="6.5" height="6.5"/><rect x="1318.6" y="401.7" width="6.5" height="6.5"/><rect x="1342.5" y="403.0" width="6.5" height="6.5"/><rect x="1366.4" y="404.1" width="6.5" height="6.5"/><rect x="1390.3" y="405.1" width="6.5" height="6.5"/><rect x="1414.2" y="405.9" width="6.5" height="6.5"/><rect x="1438.1" y="406.6" width="6.5" height="6.5"/><rect x="1462.0" y="407.4" width="6.5" height="6.5"/><rect x="1485.9" y="408.2" width="6.5" height="6.5"/><rect x="1509.8" y="408.9" width="6.5" height="6.5"/><rect x="1533.8" y="409.7" width="6.5" height="6.5"/><rect x="208.8" y="401.5" width="6.5" height="6.5"/><rect x="232.8" y="402.1" width="6.5" height="6.5"/><rect x="256.9" y="402.6" width="6.5" height="6.5"/><rect x="281.0" y="403.2" width="6.5" height="6.5"/><rect x="305.0" y="403.7" width="6.5" height="6.5"/><rect x="329.1" y="404.3" width="6.5" height="6.5"/><rect x="353.2" y="404.8" width="6.5" height="6.5"/><rect x="377.3" y="405.4" width="6.5" height="6.5"/><rect x="401.3" y="405.9" width="6.5" height="6.5"/><rect x="425.4" y="406.5" width="6.5" height="6.5"/><rect x="449.5" y="407.1" width="6.5" height="6.5"/><rect x="473.6" y="407.6" width="6.5" height="6.5"/><rect x="497.6" y="408.2" width="6.5" height="6.5"/><rect x="521.7" y="408.7" width="6.5" height="6.5"/><rect x="545.8" y="409.3" width="6.5" height="6.5"/><rect x="569.8" y="409.8" width="6.5" height="6.5"/><rect x="593.9" y="410.4" width="6.5" height="6.5"/><rect x="618.0" y="410.9" width="6.5" height="6.5"/><rect x="642.1" y="411.5" width="6.5" height="6.5"/><rect x="666.1" y="412.0" width="6.5" height="6.5"/><rect x="690.2" y="412.6" width="6.5" height="6.5"/><rect x="714.3" y="413.3" width="6.5" height="6.5"/><rect x="738.4" y="414.1" width="6.5" height="6.5"/><rect x="762.4" y="414.9" width="6.5" height="6.5"/><rect x="786.5" y="415.6" width="6.5" height="6.5"/><rect x="810.6" y="415.9" width="6.5" height="6.5"/><rect x="834.6" y="415.7" width="6.5" height="6.5"/><rect x="858.7" y="415.5" width="6.5" height="6.5"/><rect x="882.8" y="415.3" width="6.5" height="6.5"/><rect x="906.9" y="414.9" width="6.5" height="6.5"/><rect x="930.9" y="414.4" width="6.5" height="6.5"/><rect x="955.0" y="413.8" width="6.5" height="6.5"/><rect x="979.1" y="412.8" width="6.5" height="6.5"/><rect x="1003.1" y="411.8" width="6.5" height="6.5"/><rect x="1027.2" y="410.8" width="6.5" height="6.5"/><rect x="1051.3" y="409.7" width="6.5" height="6.5"/><rect x="1075.4" y="408.7" width="6.5" height="6.5"/><rect x="1099.4" y="407.6" width="6.5" height="6.5"/><rect x="1123.5" y="408.5" width="6.5" height="6.5"/><rect x="1147.6" y="410.6" width="6.5" height="6.5"/><rect x="1171.7" y="413.5" width="6.5" height="6.5"/><rect x="1195.7" y="416.1" width="6.5" height="6.5"/><rect x="1219.8" y="418.5" width="6.5" height="6.5"/><rect x="1243.9" y="420.2" width="6.5" height="6.5"/><rect x="1268.0" y="421.9" width="6.5" height="6.5"/><rect x="1292.0" y="423.8" width="6.5" height="6.5"/><rect x="1316.1" y="425.8" width="6.5" height="6.5"/><rect x="1340.2" y="427.2" width="6.5" height="6.5"/><rect x="1364.2" y="428.2" width="6.5" height="6.5"/><rect x="1388.3" y="429.2" width="6.5" height="6.5"/><rect x="1412.4" y="430.0" width="6.5" height="6.5"/><rect x="1436.5" y="430.7" width="6.5" height="6.5"/><rect x="1460.5" y="431.5" width="6.5" height="6.5"/><rect x="1484.6" y="432.2" width="6.5" height="6.5"/><rect x="1508.7" y="433.0" width="6.5" height="6.5"/><rect x="1532.8" y="433.7" width="6.5" height="6.5"/><rect x="223.8" y="425.5" width="6.5" height="6.5"/><rect x="247.9" y="426.1" width="6.5" height="6.5"/><rect x="272.1" y="426.6" width="6.5" height="6.5"/><rect x="296.2" y="427.2" width="6.5" height="6.5"/><rect x="320.4" y="427.8" width="6.5" height="6.5"/><rect x="344.6" y="428.4" width="6.5" height="6.5"/><rect x="368.8" y="428.9" width="6.5" height="6.5"/><rect x="392.9" y="429.5" width="6.5" height="6.5"/><rect x="417.1" y="430.1" width="6.5" height="6.5"/><rect x="441.2" y="430.6" width="6.5" height="6.5"/><rect x="465.4" y="431.2" width="6.5" height="6.5"/><rect x="489.6" y="431.8" width="6.5" height="6.5"/><rect x="513.8" y="432.3" width="6.5" height="6.5"/><rect x="537.9" y="432.9" width="6.5" height="6.5"/><rect x="562.1" y="433.5" width="6.5" height="6.5"/><rect x="586.2" y="434.0" width="6.5" height="6.5"/><rect x="610.4" y="434.6" width="6.5" height="6.5"/><rect x="634.6" y="435.2" width="6.5" height="6.5"/><rect x="658.8" y="435.7" width="6.5" height="6.5"/><rect x="682.9" y="436.3" width="6.5" height="6.5"/><rect x="707.1" y="436.9" width="6.5" height="6.5"/><rect x="731.2" y="437.7" width="6.5" height="6.5"/><rect x="755.4" y="438.5" width="6.5" height="6.5"/><rect x="779.6" y="439.3" width="6.5" height="6.5"/><rect x="803.8" y="439.8" width="6.5" height="6.5"/><rect x="827.9" y="439.7" width="6.5" height="6.5"/><rect x="852.1" y="439.5" width="6.5" height="6.5"/><rect x="876.2" y="439.4" width="6.5" height="6.5"/><rect x="900.4" y="439.3" width="6.5" height="6.5"/><rect x="924.6" y="438.8" width="6.5" height="6.5"/><rect x="948.8" y="438.3" width="6.5" height="6.5"/><rect x="972.9" y="437.6" width="6.5" height="6.5"/><rect x="997.1" y="436.8" width="6.5" height="6.5"/><rect x="1021.2" y="435.9" width="6.5" height="6.5"/><rect x="1045.4" y="434.9" width="6.5" height="6.5"/><rect x="1069.6" y="434.0" width="6.5" height="6.5"/><rect x="1093.8" y="433.2" width="6.5" height="6.5"/><rect x="1117.9" y="433.5" width="6.5" height="6.5"/><rect x="1142.1" y="435.2" width="6.5" height="6.5"/><rect x="1166.2" y="437.9" width="6.5" height="6.5"/><rect x="1190.4" y="440.4" width="6.5" height="6.5"/><rect x="1214.6" y="442.8" width="6.5" height="6.5"/><rect x="1238.8" y="444.5" width="6.5" height="6.5"/><rect x="1262.9" y="446.1" width="6.5" height="6.5"/><rect x="1287.1" y="447.8" width="6.5" height="6.5"/><rect x="1311.2" y="449.7" width="6.5" height="6.5"/><rect x="1335.4" y="451.2" width="6.5" height="6.5"/><rect x="1359.6" y="452.2" width="6.5" height="6.5"/><rect x="1383.8" y="453.1" width="6.5" height="6.5"/><rect x="1407.9" y="454.0" width="6.5" height="6.5"/><rect x="1432.1" y="454.7" width="6.5" height="6.5"/><rect x="1456.2" y="455.5" width="6.5" height="6.5"/><rect x="1480.4" y="456.2" width="6.5" height="6.5"/><rect x="1504.6" y="456.9" width="6.5" height="6.5"/><rect x="1528.8" y="457.7" width="6.5" height="6.5"/><rect x="237.8" y="450.5" width="6.5" height="6.5"/><rect x="262.1" y="451.1" width="6.5" height="6.5"/><rect x="286.4" y="451.7" width="6.5" height="6.5"/><rect x="310.8" y="452.3" width="6.5" height="6.5"/><rect x="335.1" y="452.8" width="6.5" height="6.5"/><rect x="359.4" y="453.4" width="6.5" height="6.5"/><rect x="383.8" y="454.0" width="6.5" height="6.5"/><rect x="408.1" y="454.6" width="6.5" height="6.5"/><rect x="432.5" y="455.2" width="6.5" height="6.5"/><rect x="456.8" y="455.8" width="6.5" height="6.5"/><rect x="481.1" y="456.3" width="6.5" height="6.5"/><rect x="505.5" y="456.9" width="6.5" height="6.5"/><rect x="529.8" y="457.5" width="6.5" height="6.5"/><rect x="554.2" y="458.1" width="6.5" height="6.5"/><rect x="578.5" y="458.7" width="6.5" height="6.5"/><rect x="602.8" y="459.2" width="6.5" height="6.5"/><rect x="627.2" y="459.8" width="6.5" height="6.5"/><rect x="651.5" y="460.4" width="6.5" height="6.5"/><rect x="675.9" y="461.0" width="6.5" height="6.5"/><rect x="700.2" y="461.6" width="6.5" height="6.5"/><rect x="724.5" y="462.3" width="6.5" height="6.5"/><rect x="748.9" y="463.1" width="6.5" height="6.5"/><rect x="773.2" y="463.9" width="6.5" height="6.5"/><rect x="797.6" y="464.6" width="6.5" height="6.5"/><rect x="821.9" y="464.6" width="6.5" height="6.5"/><rect x="846.2" y="464.5" width="6.5" height="6.5"/><rect x="870.6" y="464.5" width="6.5" height="6.5"/><rect x="894.9" y="464.5" width="6.5" height="6.5"/><rect x="919.3" y="464.1" width="6.5" height="6.5"/><rect x="943.6" y="463.8" width="6.5" height="6.5"/><rect x="967.9" y="463.2" width="6.5" height="6.5"/><rect x="992.3" y="462.5" width="6.5" height="6.5"/><rect x="1016.6" y="461.8" width="6.5" height="6.5"/><rect x="1041.0" y="461.0" width="6.5" height="6.5"/><rect x="1065.3" y="460.2" width="6.5" height="6.5"/><rect x="1089.6" y="459.5" width="6.5" height="6.5"/><rect x="1114.0" y="459.6" width="6.5" height="6.5"/><rect x="1138.3" y="460.9" width="6.5" height="6.5"/><rect x="1162.7" y="463.5" width="6.5" height="6.5"/><rect x="1187.0" y="465.9" width="6.5" height="6.5"/><rect x="1211.3" y="468.2" width="6.5" height="6.5"/><rect x="1235.7" y="469.8" width="6.5" height="6.5"/><rect x="1260.0" y="471.3" width="6.5" height="6.5"/><rect x="1284.4" y="472.9" width="6.5" height="6.5"/><rect x="1308.7" y="474.7" width="6.5" height="6.5"/><rect x="1333.0" y="476.3" width="6.5" height="6.5"/><rect x="1357.4" y="477.2" width="6.5" height="6.5"/><rect x="1381.7" y="478.1" width="6.5" height="6.5"/><rect x="1406.1" y="479.0" width="6.5" height="6.5"/><rect x="1430.4" y="479.7" width="6.5" height="6.5"/><rect x="1454.7" y="480.5" width="6.5" height="6.5"/><rect x="1479.1" y="481.2" width="6.5" height="6.5"/><rect x="1503.4" y="481.9" width="6.5" height="6.5"/><rect x="1527.8" y="482.7" width="6.5" height="6.5"/><rect x="252.8" y="474.5" width="6.5" height="6.5"/><rect x="276.8" y="475.1" width="6.5" height="6.5"/><rect x="300.8" y="475.7" width="6.5" height="6.5"/><rect x="324.8" y="476.2" width="6.5" height="6.5"/><rect x="348.8" y="476.8" width="6.5" height="6.5"/><rect x="372.8" y="477.4" width="6.5" height="6.5"/><rect x="396.9" y="477.9" width="6.5" height="6.5"/><rect x="420.9" y="478.5" width="6.5" height="6.5"/><rect x="444.9" y="479.1" width="6.5" height="6.5"/><rect x="468.9" y="479.6" width="6.5" height="6.5"/><rect x="492.9" y="480.2" width="6.5" height="6.5"/><rect x="517.0" y="480.7" width="6.5" height="6.5"/><rect x="541.0" y="481.3" width="6.5" height="6.5"/><rect x="565.0" y="481.9" width="6.5" height="6.5"/><rect x="589.0" y="482.4" width="6.5" height="6.5"/><rect x="613.0" y="483.0" width="6.5" height="6.5"/><rect x="637.1" y="483.6" width="6.5" height="6.5"/><rect x="661.1" y="484.1" width="6.5" height="6.5"/><rect x="685.1" y="484.7" width="6.5" height="6.5"/><rect x="709.1" y="485.3" width="6.5" height="6.5"/><rect x="733.1" y="486.1" width="6.5" height="6.5"/><rect x="757.1" y="486.8" width="6.5" height="6.5"/><rect x="781.2" y="487.5" width="6.5" height="6.5"/><rect x="805.2" y="488.0" width="6.5" height="6.5"/><rect x="829.2" y="488.0" width="6.5" height="6.5"/><rect x="853.2" y="488.0" width="6.5" height="6.5"/><rect x="877.2" y="488.1" width="6.5" height="6.5"/><rect x="901.3" y="488.0" width="6.5" height="6.5"/><rect x="925.3" y="487.8" width="6.5" height="6.5"/><rect x="949.3" y="487.5" width="6.5" height="6.5"/><rect x="973.3" y="487.0" width="6.5" height="6.5"/><rect x="997.3" y="486.4" width="6.5" height="6.5"/><rect x="1021.4" y="485.8" width="6.5" height="6.5"/><rect x="1045.4" y="485.2" width="6.5" height="6.5"/><rect x="1069.4" y="484.6" width="6.5" height="6.5"/><rect x="1093.4" y="484.0" width="6.5" height="6.5"/><rect x="1117.4" y="484.3" width="6.5" height="6.5"/><rect x="1141.4" y="485.8" width="6.5" height="6.5"/><rect x="1165.5" y="488.0" width="6.5" height="6.5"/><rect x="1189.5" y="490.2" width="6.5" height="6.5"/><rect x="1213.5" y="492.3" width="6.5" height="6.5"/><rect x="1237.5" y="493.7" width="6.5" height="6.5"/><rect x="1261.5" y="495.1" width="6.5" height="6.5"/><rect x="1285.6" y="496.6" width="6.5" height="6.5"/><rect x="1309.6" y="498.2" width="6.5" height="6.5"/><rect x="1333.6" y="499.6" width="6.5" height="6.5"/><rect x="1357.6" y="500.5" width="6.5" height="6.5"/><rect x="1381.6" y="501.4" width="6.5" height="6.5"/><rect x="1405.7" y="502.2" width="6.5" height="6.5"/><rect x="1429.7" y="502.9" width="6.5" height="6.5"/><rect x="1453.7" y="503.6" width="6.5" height="6.5"/><rect x="1477.7" y="504.3" width="6.5" height="6.5"/><rect x="1501.7" y="505.0" width="6.5" height="6.5"/><rect x="1525.8" y="505.7" width="6.5" height="6.5"/><rect x="266.8" y="499.5" width="6.5" height="6.5"/><rect x="290.9" y="500.1" width="6.5" height="6.5"/><rect x="315.1" y="500.7" width="6.5" height="6.5"/><rect x="339.3" y="501.3" width="6.5" height="6.5"/><rect x="363.4" y="501.9" width="6.5" height="6.5"/><rect x="387.6" y="502.5" width="6.5" height="6.5"/><rect x="411.8" y="503.1" width="6.5" height="6.5"/><rect x="436.0" y="503.7" width="6.5" height="6.5"/><rect x="460.1" y="504.3" width="6.5" height="6.5"/><rect x="484.3" y="504.9" width="6.5" height="6.5"/><rect x="508.5" y="505.5" width="6.5" height="6.5"/><rect x="532.7" y="506.1" width="6.5" height="6.5"/><rect x="556.8" y="506.7" width="6.5" height="6.5"/><rect x="581.0" y="507.3" width="6.5" height="6.5"/><rect x="605.2" y="507.9" width="6.5" height="6.5"/><rect x="629.3" y="508.5" width="6.5" height="6.5"/><rect x="653.5" y="509.1" width="6.5" height="6.5"/><rect x="677.7" y="509.7" width="6.5" height="6.5"/><rect x="701.9" y="510.3" width="6.5" height="6.5"/><rect x="726.0" y="511.1" width="6.5" height="6.5"/><rect x="750.2" y="511.8" width="6.5" height="6.5"/><rect x="774.4" y="512.6" width="6.5" height="6.5"/><rect x="798.6" y="513.3" width="6.5" height="6.5"/><rect x="822.7" y="513.4" width="6.5" height="6.5"/><rect x="846.9" y="513.5" width="6.5" height="6.5"/><rect x="871.1" y="513.6" width="6.5" height="6.5"/><rect x="895.2" y="513.7" width="6.5" height="6.5"/><rect x="919.4" y="513.6" width="6.5" height="6.5"/><rect x="943.6" y="513.4" width="6.5" height="6.5"/><rect x="967.8" y="513.2" width="6.5" height="6.5"/><rect x="991.9" y="512.8" width="6.5" height="6.5"/><rect x="1016.1" y="512.3" width="6.5" height="6.5"/><rect x="1040.3" y="511.9" width="6.5" height="6.5"/><rect x="1064.5" y="511.4" width="6.5" height="6.5"/><rect x="1088.6" y="511.0" width="6.5" height="6.5"/><rect x="1112.8" y="511.1" width="6.5" height="6.5"/><rect x="1137.0" y="512.2" width="6.5" height="6.5"/><rect x="1161.2" y="514.4" width="6.5" height="6.5"/><rect x="1185.3" y="516.4" width="6.5" height="6.5"/><rect x="1209.5" y="518.4" width="6.5" height="6.5"/><rect x="1233.7" y="519.8" width="6.5" height="6.5"/><rect x="1257.8" y="521.2" width="6.5" height="6.5"/><rect x="1282.0" y="522.5" width="6.5" height="6.5"/><rect x="1306.2" y="524.1" width="6.5" height="6.5"/><rect x="1330.4" y="525.5" width="6.5" height="6.5"/><rect x="1354.5" y="526.4" width="6.5" height="6.5"/><rect x="1378.7" y="527.2" width="6.5" height="6.5"/><rect x="1402.9" y="528.1" width="6.5" height="6.5"/><rect x="1427.1" y="528.8" width="6.5" height="6.5"/><rect x="1451.2" y="529.5" width="6.5" height="6.5"/><rect x="1475.4" y="530.2" width="6.5" height="6.5"/><rect x="1499.6" y="531.0" width="6.5" height="6.5"/><rect x="1523.8" y="531.7" width="6.5" height="6.5"/><rect x="281.8" y="523.6" width="6.5" height="6.5"/><rect x="306.1" y="524.2" width="6.5" height="6.5"/><rect x="330.4" y="524.8" width="6.5" height="6.5"/><rect x="354.7" y="525.4" width="6.5" height="6.5"/><rect x="379.0" y="526.0" width="6.5" height="6.5"/><rect x="403.3" y="526.6" width="6.5" height="6.5"/><rect x="427.6" y="527.2" width="6.5" height="6.5"/><rect x="451.9" y="527.8" width="6.5" height="6.5"/><rect x="476.3" y="528.4" width="6.5" height="6.5"/><rect x="500.6" y="529.0" width="6.5" height="6.5"/><rect x="524.9" y="529.6" width="6.5" height="6.5"/><rect x="549.2" y="530.2" width="6.5" height="6.5"/><rect x="573.5" y="530.8" width="6.5" height="6.5"/><rect x="597.8" y="531.4" width="6.5" height="6.5"/><rect x="622.1" y="532.0" width="6.5" height="6.5"/><rect x="646.5" y="532.6" width="6.5" height="6.5"/><rect x="670.8" y="533.2" width="6.5" height="6.5"/><rect x="695.1" y="533.8" width="6.5" height="6.5"/><rect x="719.4" y="534.5" width="6.5" height="6.5"/><rect x="743.7" y="535.2" width="6.5" height="6.5"/><rect x="768.0" y="536.0" width="6.5" height="6.5"/><rect x="792.3" y="536.7" width="6.5" height="6.5"/><rect x="816.7" y="537.0" width="6.5" height="6.5"/><rect x="841.0" y="537.2" width="6.5" height="6.5"/><rect x="865.3" y="537.3" width="6.5" height="6.5"/><rect x="889.6" y="537.5" width="6.5" height="6.5"/><rect x="913.9" y="537.5" width="6.5" height="6.5"/><rect x="938.2" y="537.5" width="6.5" height="6.5"/><rect x="962.5" y="537.4" width="6.5" height="6.5"/><rect x="986.8" y="537.1" width="6.5" height="6.5"/><rect x="1011.2" y="536.9" width="6.5" height="6.5"/><rect x="1035.5" y="536.5" width="6.5" height="6.5"/><rect x="1059.8" y="536.2" width="6.5" height="6.5"/><rect x="1084.1" y="535.9" width="6.5" height="6.5"/><rect x="1108.4" y="535.8" width="6.5" height="6.5"/><rect x="1132.7" y="536.9" width="6.5" height="6.5"/><rect x="1157.0" y="538.7" width="6.5" height="6.5"/><rect x="1181.4" y="540.6" width="6.5" height="6.5"/><rect x="1205.7" y="542.4" width="6.5" height="6.5"/><rect x="1230.0" y="543.8" width="6.5" height="6.5"/><rect x="1254.3" y="545.1" width="6.5" height="6.5"/><rect x="1278.6" y="546.3" width="6.5" height="6.5"/><rect x="1302.9" y="547.7" width="6.5" height="6.5"/><rect x="1327.2" y="549.1" width="6.5" height="6.5"/><rect x="1351.6" y="550.0" width="6.5" height="6.5"/><rect x="1375.9" y="550.8" width="6.5" height="6.5"/><rect x="1400.2" y="551.6" width="6.5" height="6.5"/><rect x="1424.5" y="552.3" width="6.5" height="6.5"/><rect x="1448.8" y="553.1" width="6.5" height="6.5"/><rect x="1473.1" y="553.8" width="6.5" height="6.5"/><rect x="1497.4" y="554.5" width="6.5" height="6.5"/><rect x="1521.8" y="555.2" width="6.5" height="6.5"/><rect x="294.8" y="549.1" width="6.5" height="6.5"/><rect x="319.3" y="549.7" width="6.5" height="6.5"/><rect x="343.8" y="550.3" width="6.5" height="6.5"/><rect x="368.3" y="551.0" width="6.5" height="6.5"/><rect x="392.8" y="551.6" width="6.5" height="6.5"/><rect x="417.4" y="552.2" width="6.5" height="6.5"/><rect x="441.9" y="552.8" width="6.5" height="6.5"/><rect x="466.4" y="553.5" width="6.5" height="6.5"/><rect x="490.9" y="554.1" width="6.5" height="6.5"/><rect x="515.4" y="554.7" width="6.5" height="6.5"/><rect x="540.0" y="555.4" width="6.5" height="6.5"/><rect x="564.5" y="556.0" width="6.5" height="6.5"/><rect x="589.0" y="556.6" width="6.5" height="6.5"/><rect x="613.5" y="557.2" width="6.5" height="6.5"/><rect x="638.0" y="557.9" width="6.5" height="6.5"/><rect x="662.5" y="558.5" width="6.5" height="6.5"/><rect x="687.1" y="559.1" width="6.5" height="6.5"/><rect x="711.6" y="559.8" width="6.5" height="6.5"/><rect x="736.1" y="560.5" width="6.5" height="6.5"/><rect x="760.6" y="561.3" width="6.5" height="6.5"/><rect x="785.1" y="562.0" width="6.5" height="6.5"/><rect x="809.7" y="562.5" width="6.5" height="6.5"/><rect x="834.2" y="562.8" width="6.5" height="6.5"/><rect x="858.7" y="563.0" width="6.5" height="6.5"/><rect x="883.2" y="563.3" width="6.5" height="6.5"/><rect x="907.8" y="563.5" width="6.5" height="6.5"/><rect x="932.3" y="563.6" width="6.5" height="6.5"/><rect x="956.8" y="563.6" width="6.5" height="6.5"/><rect x="981.3" y="563.5" width="6.5" height="6.5"/><rect x="1005.8" y="563.4" width="6.5" height="6.5"/><rect x="1030.3" y="563.2" width="6.5" height="6.5"/><rect x="1054.9" y="563.1" width="6.5" height="6.5"/><rect x="1079.4" y="562.9" width="6.5" height="6.5"/><rect x="1103.9" y="562.8" width="6.5" height="6.5"/><rect x="1128.4" y="563.8" width="6.5" height="6.5"/><rect x="1153.0" y="565.3" width="6.5" height="6.5"/><rect x="1177.5" y="567.1" width="6.5" height="6.5"/><rect x="1202.0" y="568.7" width="6.5" height="6.5"/><rect x="1226.5" y="570.1" width="6.5" height="6.5"/><rect x="1251.0" y="571.3" width="6.5" height="6.5"/><rect x="1275.5" y="572.5" width="6.5" height="6.5"/><rect x="1300.1" y="573.8" width="6.5" height="6.5"/><rect x="1324.6" y="575.1" width="6.5" height="6.5"/><rect x="1349.1" y="576.0" width="6.5" height="6.5"/><rect x="1373.6" y="576.8" width="6.5" height="6.5"/><rect x="1398.2" y="577.6" width="6.5" height="6.5"/><rect x="1422.7" y="578.3" width="6.5" height="6.5"/><rect x="1447.2" y="579.0" width="6.5" height="6.5"/><rect x="1471.7" y="579.8" width="6.5" height="6.5"/><rect x="1496.2" y="580.5" width="6.5" height="6.5"/><rect x="1520.8" y="581.2" width="6.5" height="6.5"/><rect x="309.8" y="574.1" width="6.5" height="6.5"/><rect x="334.4" y="574.7" width="6.5" height="6.5"/><rect x="359.0" y="575.3" width="6.5" height="6.5"/><rect x="383.6" y="575.9" width="6.5" height="6.5"/><rect x="408.3" y="576.6" width="6.5" height="6.5"/><rect x="432.9" y="577.2" width="6.5" height="6.5"/><rect x="457.5" y="577.8" width="6.5" height="6.5"/><rect x="482.2" y="578.4" width="6.5" height="6.5"/><rect x="506.8" y="579.0" width="6.5" height="6.5"/><rect x="531.4" y="579.6" width="6.5" height="6.5"/><rect x="556.1" y="580.2" width="6.5" height="6.5"/><rect x="580.7" y="580.8" width="6.5" height="6.5"/><rect x="605.3" y="581.4" width="6.5" height="6.5"/><rect x="630.0" y="582.1" width="6.5" height="6.5"/><rect x="654.6" y="582.7" width="6.5" height="6.5"/><rect x="679.2" y="583.3" width="6.5" height="6.5"/><rect x="703.9" y="583.9" width="6.5" height="6.5"/><rect x="728.5" y="584.6" width="6.5" height="6.5"/><rect x="753.1" y="585.3" width="6.5" height="6.5"/><rect x="777.8" y="586.0" width="6.5" height="6.5"/><rect x="802.4" y="586.6" width="6.5" height="6.5"/><rect x="827.0" y="586.9" width="6.5" height="6.5"/><rect x="851.7" y="587.3" width="6.5" height="6.5"/><rect x="876.3" y="587.6" width="6.5" height="6.5"/><rect x="900.9" y="587.9" width="6.5" height="6.5"/><rect x="925.6" y="588.0" width="6.5" height="6.5"/><rect x="950.2" y="588.2" width="6.5" height="6.5"/><rect x="974.8" y="588.2" width="6.5" height="6.5"/><rect x="999.5" y="588.2" width="6.5" height="6.5"/><rect x="1024.1" y="588.2" width="6.5" height="6.5"/><rect x="1048.7" y="588.2" width="6.5" height="6.5"/><rect x="1073.4" y="588.2" width="6.5" height="6.5"/><rect x="1098.0" y="588.1" width="6.5" height="6.5"/><rect x="1122.6" y="588.8" width="6.5" height="6.5"/><rect x="1147.3" y="590.0" width="6.5" height="6.5"/><rect x="1171.9" y="591.6" width="6.5" height="6.5"/><rect x="1196.5" y="593.0" width="6.5" height="6.5"/><rect x="1221.2" y="594.3" width="6.5" height="6.5"/><rect x="1245.8" y="595.4" width="6.5" height="6.5"/><rect x="1270.4" y="596.5" width="6.5" height="6.5"/><rect x="1295.1" y="597.6" width="6.5" height="6.5"/><rect x="1319.7" y="598.8" width="6.5" height="6.5"/><rect x="1344.3" y="599.7" width="6.5" height="6.5"/><rect x="1369.0" y="600.5" width="6.5" height="6.5"/><rect x="1393.6" y="601.2" width="6.5" height="6.5"/><rect x="1418.2" y="601.9" width="6.5" height="6.5"/><rect x="1442.9" y="602.6" width="6.5" height="6.5"/><rect x="1467.5" y="603.3" width="6.5" height="6.5"/><rect x="1492.1" y="604.0" width="6.5" height="6.5"/><rect x="1516.8" y="604.7" width="6.5" height="6.5"/><rect x="323.8" y="599.6" width="6.5" height="6.5"/><rect x="348.1" y="600.2" width="6.5" height="6.5"/><rect x="372.4" y="600.8" width="6.5" height="6.5"/><rect x="396.7" y="601.4" width="6.5" height="6.5"/><rect x="421.0" y="602.1" width="6.5" height="6.5"/><rect x="445.3" y="602.7" width="6.5" height="6.5"/><rect x="469.6" y="603.3" width="6.5" height="6.5"/><rect x="493.9" y="603.9" width="6.5" height="6.5"/><rect x="518.2" y="604.5" width="6.5" height="6.5"/><rect x="542.5" y="605.1" width="6.5" height="6.5"/><rect x="566.8" y="605.7" width="6.5" height="6.5"/><rect x="591.1" y="606.3" width="6.5" height="6.5"/><rect x="615.4" y="606.9" width="6.5" height="6.5"/><rect x="639.7" y="607.5" width="6.5" height="6.5"/><rect x="664.0" y="608.1" width="6.5" height="6.5"/><rect x="688.3" y="608.7" width="6.5" height="6.5"/><rect x="712.6" y="609.3" width="6.5" height="6.5"/><rect x="737.0" y="610.0" width="6.5" height="6.5"/><rect x="761.3" y="610.7" width="6.5" height="6.5"/><rect x="785.6" y="611.4" width="6.5" height="6.5"/><rect x="809.9" y="611.9" width="6.5" height="6.5"/><rect x="834.2" y="612.2" width="6.5" height="6.5"/><rect x="858.5" y="612.6" width="6.5" height="6.5"/><rect x="882.8" y="613.0" width="6.5" height="6.5"/><rect x="907.1" y="613.3" width="6.5" height="6.5"/><rect x="931.4" y="613.6" width="6.5" height="6.5"/><rect x="955.7" y="613.9" width="6.5" height="6.5"/><rect x="980.0" y="614.0" width="6.5" height="6.5"/><rect x="1004.3" y="614.1" width="6.5" height="6.5"/><rect x="1028.6" y="614.3" width="6.5" height="6.5"/><rect x="1052.9" y="614.4" width="6.5" height="6.5"/><rect x="1077.2" y="614.5" width="6.5" height="6.5"/><rect x="1101.5" y="614.6" width="6.5" height="6.5"/><rect x="1125.9" y="615.4" width="6.5" height="6.5"/><rect x="1150.2" y="616.5" width="6.5" height="6.5"/><rect x="1174.5" y="617.8" width="6.5" height="6.5"/><rect x="1198.8" y="619.0" width="6.5" height="6.5"/><rect x="1223.1" y="620.1" width="6.5" height="6.5"/><rect x="1247.4" y="621.1" width="6.5" height="6.5"/><rect x="1271.7" y="622.1" width="6.5" height="6.5"/><rect x="1296.0" y="623.1" width="6.5" height="6.5"/><rect x="1320.3" y="624.1" width="6.5" height="6.5"/><rect x="1344.6" y="624.9" width="6.5" height="6.5"/><rect x="1368.9" y="625.7" width="6.5" height="6.5"/><rect x="1393.2" y="626.4" width="6.5" height="6.5"/><rect x="1417.5" y="627.1" width="6.5" height="6.5"/><rect x="1441.8" y="627.7" width="6.5" height="6.5"/><rect x="1466.1" y="628.4" width="6.5" height="6.5"/><rect x="1490.4" y="629.0" width="6.5" height="6.5"/><rect x="1514.8" y="629.7" width="6.5" height="6.5"/><rect x="338.8" y="624.7" width="6.5" height="6.5"/><rect x="363.2" y="625.3" width="6.5" height="6.5"/><rect x="387.7" y="625.9" width="6.5" height="6.5"/><rect x="412.2" y="626.6" width="6.5" height="6.5"/><rect x="436.7" y="627.2" width="6.5" height="6.5"/><rect x="461.1" y="627.8" width="6.5" height="6.5"/><rect x="485.6" y="628.4" width="6.5" height="6.5"/><rect x="510.1" y="629.1" width="6.5" height="6.5"/><rect x="534.6" y="629.7" width="6.5" height="6.5"/><rect x="559.1" y="630.3" width="6.5" height="6.5"/><rect x="583.5" y="631.0" width="6.5" height="6.5"/><rect x="608.0" y="631.6" width="6.5" height="6.5"/><rect x="632.5" y="632.2" width="6.5" height="6.5"/><rect x="657.0" y="632.9" width="6.5" height="6.5"/><rect x="681.5" y="633.5" width="6.5" height="6.5"/><rect x="705.9" y="634.1" width="6.5" height="6.5"/><rect x="730.4" y="634.8" width="6.5" height="6.5"/><rect x="754.9" y="635.5" width="6.5" height="6.5"/><rect x="779.4" y="636.2" width="6.5" height="6.5"/><rect x="803.9" y="636.8" width="6.5" height="6.5"/><rect x="828.3" y="637.2" width="6.5" height="6.5"/><rect x="852.8" y="637.7" width="6.5" height="6.5"/><rect x="877.3" y="638.2" width="6.5" height="6.5"/><rect x="901.8" y="638.6" width="6.5" height="6.5"/><rect x="926.2" y="639.0" width="6.5" height="6.5"/><rect x="950.7" y="639.4" width="6.5" height="6.5"/><rect x="975.2" y="639.7" width="6.5" height="6.5"/><rect x="999.7" y="640.0" width="6.5" height="6.5"/><rect x="1024.2" y="640.3" width="6.5" height="6.5"/><rect x="1048.6" y="640.6" width="6.5" height="6.5"/><rect x="1073.1" y="640.9" width="6.5" height="6.5"/><rect x="1097.6" y="641.1" width="6.5" height="6.5"/><rect x="1122.1" y="641.8" width="6.5" height="6.5"/><rect x="1146.6" y="642.8" width="6.5" height="6.5"/><rect x="1171.0" y="643.9" width="6.5" height="6.5"/><rect x="1195.5" y="645.0" width="6.5" height="6.5"/><rect x="1220.0" y="646.0" width="6.5" height="6.5"/><rect x="1244.5" y="646.9" width="6.5" height="6.5"/><rect x="1269.0" y="647.8" width="6.5" height="6.5"/><rect x="1293.4" y="648.7" width="6.5" height="6.5"/><rect x="1317.9" y="649.6" width="6.5" height="6.5"/><rect x="1342.4" y="650.4" width="6.5" height="6.5"/><rect x="1366.9" y="651.1" width="6.5" height="6.5"/><rect x="1391.4" y="651.9" width="6.5" height="6.5"/><rect x="1415.8" y="652.5" width="6.5" height="6.5"/><rect x="1440.3" y="653.2" width="6.5" height="6.5"/><rect x="1464.8" y="653.9" width="6.5" height="6.5"/><rect x="1489.3" y="654.5" width="6.5" height="6.5"/><rect x="1513.8" y="655.2" width="6.5" height="6.5"/><rect x="353.8" y="649.7" width="6.5" height="6.5"/><rect x="378.4" y="650.4" width="6.5" height="6.5"/><rect x="403.0" y="651.0" width="6.5" height="6.5"/><rect x="427.7" y="651.7" width="6.5" height="6.5"/><rect x="452.3" y="652.3" width="6.5" height="6.5"/><rect x="476.9" y="653.0" width="6.5" height="6.5"/><rect x="501.6" y="653.6" width="6.5" height="6.5"/><rect x="526.2" y="654.3" width="6.5" height="6.5"/><rect x="550.9" y="654.9" width="6.5" height="6.5"/><rect x="575.5" y="655.6" width="6.5" height="6.5"/><rect x="600.1" y="656.3" width="6.5" height="6.5"/><rect x="624.8" y="656.9" width="6.5" height="6.5"/><rect x="649.4" y="657.6" width="6.5" height="6.5"/><rect x="674.0" y="658.2" width="6.5" height="6.5"/><rect x="698.7" y="658.9" width="6.5" height="6.5"/><rect x="723.3" y="659.6" width="6.5" height="6.5"/><rect x="748.0" y="660.3" width="6.5" height="6.5"/><rect x="772.6" y="660.9" width="6.5" height="6.5"/><rect x="797.2" y="661.6" width="6.5" height="6.5"/><rect x="821.9" y="662.2" width="6.5" height="6.5"/><rect x="846.5" y="662.7" width="6.5" height="6.5"/><rect x="871.2" y="663.3" width="6.5" height="6.5"/><rect x="895.8" y="663.9" width="6.5" height="6.5"/><rect x="920.4" y="664.4" width="6.5" height="6.5"/><rect x="945.1" y="664.9" width="6.5" height="6.5"/><rect x="969.7" y="665.4" width="6.5" height="6.5"/><rect x="994.3" y="665.8" width="6.5" height="6.5"/><rect x="1019.0" y="666.3" width="6.5" height="6.5"/><rect x="1043.6" y="666.7" width="6.5" height="6.5"/><rect x="1068.3" y="667.2" width="6.5" height="6.5"/><rect x="1092.9" y="667.6" width="6.5" height="6.5"/><rect x="1117.5" y="668.3" width="6.5" height="6.5"/><rect x="1142.2" y="669.1" width="6.5" height="6.5"/><rect x="1166.8" y="670.0" width="6.5" height="6.5"/><rect x="1191.5" y="670.9" width="6.5" height="6.5"/><rect x="1216.1" y="671.9" width="6.5" height="6.5"/><rect x="1240.7" y="672.7" width="6.5" height="6.5"/><rect x="1265.4" y="673.5" width="6.5" height="6.5"/><rect x="1290.0" y="674.3" width="6.5" height="6.5"/><rect x="1314.6" y="675.1" width="6.5" height="6.5"/><rect x="1339.3" y="675.9" width="6.5" height="6.5"/><rect x="1363.9" y="676.6" width="6.5" height="6.5"/><rect x="1388.6" y="677.3" width="6.5" height="6.5"/><rect x="1413.2" y="678.0" width="6.5" height="6.5"/><rect x="1437.8" y="678.7" width="6.5" height="6.5"/><rect x="1462.5" y="679.4" width="6.5" height="6.5"/><rect x="1487.1" y="680.0" width="6.5" height="6.5"/><rect x="1511.8" y="680.7" width="6.5" height="6.5"/><rect x="369.2" y="674.2" width="6.5" height="6.5"/><rect x="394.0" y="674.9" width="6.5" height="6.5"/><rect x="418.8" y="675.6" width="6.5" height="6.5"/><rect x="443.6" y="676.3" width="6.5" height="6.5"/><rect x="468.4" y="677.0" width="6.5" height="6.5"/><rect x="493.2" y="677.7" width="6.5" height="6.5"/><rect x="518.0" y="678.3" width="6.5" height="6.5"/><rect x="542.8" y="679.0" width="6.5" height="6.5"/><rect x="567.6" y="679.7" width="6.5" height="6.5"/><rect x="592.4" y="680.4" width="6.5" height="6.5"/><rect x="617.2" y="681.1" width="6.5" height="6.5"/><rect x="642.0" y="681.8" width="6.5" height="6.5"/><rect x="666.8" y="682.4" width="6.5" height="6.5"/><rect x="691.6" y="683.1" width="6.5" height="6.5"/><rect x="716.4" y="683.8" width="6.5" height="6.5"/><rect x="741.2" y="684.5" width="6.5" height="6.5"/><rect x="765.9" y="685.2" width="6.5" height="6.5"/><rect x="790.7" y="685.9" width="6.5" height="6.5"/><rect x="815.5" y="686.6" width="6.5" height="6.5"/><rect x="840.3" y="687.2" width="6.5" height="6.5"/><rect x="865.1" y="687.9" width="6.5" height="6.5"/><rect x="889.9" y="688.5" width="6.5" height="6.5"/><rect x="914.7" y="689.2" width="6.5" height="6.5"/><rect x="939.5" y="689.8" width="6.5" height="6.5"/><rect x="964.3" y="690.4" width="6.5" height="6.5"/><rect x="989.1" y="691.1" width="6.5" height="6.5"/><rect x="1013.9" y="691.7" width="6.5" height="6.5"/><rect x="1038.7" y="692.3" width="6.5" height="6.5"/><rect x="1063.5" y="692.9" width="6.5" height="6.5"/><rect x="1088.3" y="693.5" width="6.5" height="6.5"/><rect x="1113.1" y="694.2" width="6.5" height="6.5"/><rect x="1137.8" y="694.9" width="6.5" height="6.5"/><rect x="1162.6" y="695.7" width="6.5" height="6.5"/><rect x="1187.4" y="696.5" width="6.5" height="6.5"/><rect x="1212.2" y="697.2" width="6.5" height="6.5"/><rect x="1237.0" y="698.0" width="6.5" height="6.5"/><rect x="1261.8" y="698.7" width="6.5" height="6.5"/><rect x="1286.6" y="699.4" width="6.5" height="6.5"/><rect x="1311.4" y="700.2" width="6.5" height="6.5"/><rect x="1336.2" y="700.9" width="6.5" height="6.5"/><rect x="1361.0" y="701.6" width="6.5" height="6.5"/><rect x="1385.8" y="702.3" width="6.5" height="6.5"/><rect x="1410.6" y="703.0" width="6.5" height="6.5"/><rect x="1435.4" y="703.7" width="6.5" height="6.5"/><rect x="1460.2" y="704.4" width="6.5" height="6.5"/><rect x="1485.0" y="705.1" width="6.5" height="6.5"/><rect x="1509.8" y="705.7" width="6.5" height="6.5"/><rect x="382.8" y="700.8" width="6.5" height="6.5"/><rect x="407.7" y="701.4" width="6.5" height="6.5"/><rect x="432.7" y="702.1" width="6.5" height="6.5"/><rect x="457.7" y="702.7" width="6.5" height="6.5"/><rect x="482.7" y="703.4" width="6.5" height="6.5"/><rect x="507.6" y="704.0" width="6.5" height="6.5"/><rect x="532.6" y="704.6" width="6.5" height="6.5"/><rect x="557.6" y="705.3" width="6.5" height="6.5"/><rect x="582.6" y="705.9" width="6.5" height="6.5"/><rect x="607.5" y="706.6" width="6.5" height="6.5"/><rect x="632.5" y="707.2" width="6.5" height="6.5"/><rect x="657.5" y="707.9" width="6.5" height="6.5"/><rect x="682.5" y="708.5" width="6.5" height="6.5"/><rect x="707.5" y="709.2" width="6.5" height="6.5"/><rect x="732.4" y="709.8" width="6.5" height="6.5"/><rect x="757.4" y="710.4" width="6.5" height="6.5"/><rect x="782.4" y="711.1" width="6.5" height="6.5"/><rect x="807.4" y="711.7" width="6.5" height="6.5"/><rect x="832.4" y="712.4" width="6.5" height="6.5"/><rect x="857.3" y="713.1" width="6.5" height="6.5"/><rect x="882.3" y="713.8" width="6.5" height="6.5"/><rect x="907.3" y="714.5" width="6.5" height="6.5"/><rect x="932.3" y="715.2" width="6.5" height="6.5"/><rect x="957.2" y="715.9" width="6.5" height="6.5"/><rect x="982.2" y="716.6" width="6.5" height="6.5"/><rect x="1007.2" y="717.3" width="6.5" height="6.5"/><rect x="1032.2" y="718.1" width="6.5" height="6.5"/><rect x="1057.2" y="718.8" width="6.5" height="6.5"/><rect x="1082.1" y="719.5" width="6.5" height="6.5"/><rect x="1107.1" y="720.2" width="6.5" height="6.5"/><rect x="1132.1" y="720.8" width="6.5" height="6.5"/><rect x="1157.1" y="721.4" width="6.5" height="6.5"/><rect x="1182.0" y="721.9" width="6.5" height="6.5"/><rect x="1207.0" y="722.4" width="6.5" height="6.5"/><rect x="1232.0" y="723.0" width="6.5" height="6.5"/><rect x="1257.0" y="723.6" width="6.5" height="6.5"/><rect x="1282.0" y="724.2" width="6.5" height="6.5"/><rect x="1306.9" y="724.8" width="6.5" height="6.5"/><rect x="1331.9" y="725.3" width="6.5" height="6.5"/><rect x="1356.9" y="726.0" width="6.5" height="6.5"/><rect x="1381.9" y="726.6" width="6.5" height="6.5"/><rect x="1406.8" y="727.2" width="6.5" height="6.5"/><rect x="1431.8" y="727.9" width="6.5" height="6.5"/><rect x="1456.8" y="728.5" width="6.5" height="6.5"/><rect x="1481.8" y="729.1" width="6.5" height="6.5"/><rect x="1506.8" y="729.8" width="6.5" height="6.5"/><rect x="397.8" y="726.5" width="6.5" height="6.5"/><rect x="422.4" y="727.1" width="6.5" height="6.5"/><rect x="446.9" y="727.8" width="6.5" height="6.5"/><rect x="471.6" y="728.4" width="6.5" height="6.5"/><rect x="496.1" y="729.0" width="6.5" height="6.5"/><rect x="520.8" y="729.7" width="6.5" height="6.5"/><rect x="545.4" y="730.3" width="6.5" height="6.5"/><rect x="570.0" y="730.9" width="6.5" height="6.5"/><rect x="594.5" y="731.6" width="6.5" height="6.5"/><rect x="619.1" y="732.2" width="6.5" height="6.5"/><rect x="643.8" y="732.8" width="6.5" height="6.5"/><rect x="668.4" y="733.5" width="6.5" height="6.5"/><rect x="693.0" y="734.1" width="6.5" height="6.5"/><rect x="717.5" y="734.7" width="6.5" height="6.5"/><rect x="742.1" y="735.3" width="6.5" height="6.5"/><rect x="766.8" y="735.9" width="6.5" height="6.5"/><rect x="791.4" y="736.5" width="6.5" height="6.5"/><rect x="816.0" y="737.2" width="6.5" height="6.5"/><rect x="840.5" y="738.0" width="6.5" height="6.5"/><rect x="865.1" y="738.7" width="6.5" height="6.5"/><rect x="889.8" y="739.4" width="6.5" height="6.5"/><rect x="914.4" y="740.2" width="6.5" height="6.5"/><rect x="939.0" y="741.0" width="6.5" height="6.5"/><rect x="963.5" y="741.8" width="6.5" height="6.5"/><rect x="988.1" y="742.7" width="6.5" height="6.5"/><rect x="1012.8" y="743.5" width="6.5" height="6.5"/><rect x="1037.3" y="744.4" width="6.5" height="6.5"/><rect x="1062.0" y="745.2" width="6.5" height="6.5"/><rect x="1086.5" y="746.1" width="6.5" height="6.5"/><rect x="1111.2" y="746.9" width="6.5" height="6.5"/><rect x="1135.8" y="747.4" width="6.5" height="6.5"/><rect x="1160.3" y="747.7" width="6.5" height="6.5"/><rect x="1185.0" y="748.0" width="6.5" height="6.5"/><rect x="1209.5" y="748.3" width="6.5" height="6.5"/><rect x="1234.2" y="748.8" width="6.5" height="6.5"/><rect x="1258.8" y="749.3" width="6.5" height="6.5"/><rect x="1283.3" y="749.7" width="6.5" height="6.5"/><rect x="1308.0" y="750.2" width="6.5" height="6.5"/><rect x="1332.5" y="750.6" width="6.5" height="6.5"/><rect x="1357.2" y="751.2" width="6.5" height="6.5"/><rect x="1381.8" y="751.8" width="6.5" height="6.5"/><rect x="1406.3" y="752.4" width="6.5" height="6.5"/><rect x="1431.0" y="753.0" width="6.5" height="6.5"/><rect x="1455.5" y="753.6" width="6.5" height="6.5"/><rect x="1480.2" y="754.2" width="6.5" height="6.5"/><rect x="1504.8" y="754.8" width="6.5" height="6.5"/><rect x="413.2" y="751.9" width="6.5" height="6.5"/><rect x="438.0" y="752.5" width="6.5" height="6.5"/><rect x="462.8" y="753.2" width="6.5" height="6.5"/><rect x="487.5" y="753.9" width="6.5" height="6.5"/><rect x="512.3" y="754.6" width="6.5" height="6.5"/><rect x="537.1" y="755.3" width="6.5" height="6.5"/><rect x="561.8" y="756.0" width="6.5" height="6.5"/><rect x="586.6" y="756.7" width="6.5" height="6.5"/><rect x="611.3" y="757.4" width="6.5" height="6.5"/><rect x="636.1" y="758.1" width="6.5" height="6.5"/><rect x="660.9" y="758.7" width="6.5" height="6.5"/><rect x="685.6" y="759.4" width="6.5" height="6.5"/><rect x="710.4" y="760.1" width="6.5" height="6.5"/><rect x="735.1" y="760.7" width="6.5" height="6.5"/><rect x="759.9" y="761.4" width="6.5" height="6.5"/><rect x="784.7" y="762.0" width="6.5" height="6.5"/><rect x="809.4" y="762.8" width="6.5" height="6.5"/><rect x="834.2" y="763.6" width="6.5" height="6.5"/><rect x="859.0" y="764.5" width="6.5" height="6.5"/><rect x="883.7" y="765.3" width="6.5" height="6.5"/><rect x="908.5" y="766.2" width="6.5" height="6.5"/><rect x="933.2" y="767.2" width="6.5" height="6.5"/><rect x="958.0" y="768.1" width="6.5" height="6.5"/><rect x="982.8" y="769.2" width="6.5" height="6.5"/><rect x="1007.5" y="770.2" width="6.5" height="6.5"/><rect x="1032.3" y="771.3" width="6.5" height="6.5"/><rect x="1057.0" y="772.4" width="6.5" height="6.5"/><rect x="1081.8" y="773.4" width="6.5" height="6.5"/><rect x="1106.6" y="774.4" width="6.5" height="6.5"/><rect x="1131.3" y="774.9" width="6.5" height="6.5"/><rect x="1156.1" y="775.1" width="6.5" height="6.5"/><rect x="1180.9" y="775.3" width="6.5" height="6.5"/><rect x="1205.6" y="775.5" width="6.5" height="6.5"/><rect x="1230.4" y="775.9" width="6.5" height="6.5"/><rect x="1255.1" y="776.3" width="6.5" height="6.5"/><rect x="1279.9" y="776.7" width="6.5" height="6.5"/><rect x="1304.7" y="777.1" width="6.5" height="6.5"/><rect x="1329.4" y="777.4" width="6.5" height="6.5"/><rect x="1354.2" y="778.0" width="6.5" height="6.5"/><rect x="1378.9" y="778.6" width="6.5" height="6.5"/><rect x="1403.7" y="779.2" width="6.5" height="6.5"/><rect x="1428.5" y="779.9" width="6.5" height="6.5"/><rect x="1453.2" y="780.5" width="6.5" height="6.5"/><rect x="1478.0" y="781.2" width="6.5" height="6.5"/><rect x="1502.8" y="781.8" width="6.5" height="6.5"/></g><g stroke="#c8c83c" stroke-width="2" fill="none"><path d="M74,165.5 H1585 M1586,168 V850 M1570,865.5 H75 M71.5,168 V865"/><path d="M75,169 H1582 V862 H75 Z"/></g><g stroke="#ffffff" stroke-width="2"><path d="M1573,868 H1601 M1587,854 V882"/></g><g font-family="Liberation Sans" font-weight="bold" fill="#fff" font-size="13"><text x="1763" y="160">&#963;Hmin</text><text x="1820" y="188" letter-spacing="0.5">&#963;Vert</text><text x="1768" y="210" letter-spacing="0.3">&#963;Hmax</text></g><path d="M1796,164 L1806,172" stroke="#0010c0" stroke-width="3"/><path d="M1808,189 L1798,198" stroke="#10d010" stroke-width="3"/><path d="M1806,173 L1822,181 L1808,188 Z" fill="#b00000" stroke="#e0c0c0" stroke-width="1"/><g font-family="Liberation Sans" font-weight="bold" fill="#fff" font-size="20.5"><text x="38.5" y="976">Y</text><text x="140" y="974">X</text></g><path d="M72.5,980 L81,988" stroke="#10c010" stroke-width="3"/><path d="M121.7,979 L113,987.5" stroke="#0010a0" stroke-width="3"/><path d="M82,988 L112,988 L98,997 Z" fill="#e8e8e8"/><path d="M91,982 H104 L92,994 H102" stroke="#fff" stroke-width="2" fill="none"/><path d="M96,991 L104,988" stroke="#c00000" stroke-width="2.5"/></svg><div class="abs" style="left:2px;top:947px;width:194px;height:80px;border:2px solid #c41818;border-bottom:none"></div><div class="abs" style="left:317px;top:1031px;width:1px;height:36px;background:#b8b8b8"></div><div class="abs" style="left:2px;top:1035px;width:442px;height:25px;background:#0000f5"></div><div class="t" style="left:7.0px;top:1038.5px;font-size:19.9px;color:#000058;-webkit-text-stroke:0.5px #000058">INPUT: Select second corner of crossing window</div><svg class="abs" style="left:1895px;top:1045px" width="24" height="24"><path d="M4,22 L21,5 M12,22 L21,13" stroke="#888" stroke-width="1.5"/></svg><div class="abs" style="left:807px;top:3px;width:782px;height:95px;border-radius:8px;background:#f2f2f2;overflow:hidden;border:1px solid #b4b4b4"><div class="vb" style="left:0.00px;top:51px;width:71.6px"></div><div class="vb" style="left:71.57px;top:51px;width:71.6px"></div><div class="vb" style="left:143.14px;top:51px;width:71.6px"></div><div class="vb" style="left:214.71px;top:51px;width:71.6px"></div><div class="vb" style="left:286.28px;top:51px;width:71.6px"></div><div class="vb" style="left:357.85px;top:51px;width:71.6px"></div><div class="vb" style="left:429.42px;top:51px;width:71.6px"></div><div class="vb" style="left:500.99px;top:51px;width:71.6px"></div><div class="vb" style="left:572.56px;top:51px;width:71.6px"></div><div class="vb" style="left:644.13px;top:51px;width:71.6px"></div><div class="vb" style="left:715.70px;top:51px;width:71.6px"></div></div><div class="t" style="left:822.0px;top:20.0px;font-size:19.5px;color:#858585;">View</div><div class="t" style="left:874.4px;top:61.9px;width:80px;text-align:center;font-size:17px;color:#000;letter-spacing:0.7px;">Length</div><div class="t" style="left:945.9px;top:61.9px;width:80px;text-align:center;font-size:17px;color:#000;">Hid<span class="trv"></span></div><div class="t" style="left:1017.5px;top:61.9px;width:80px;text-align:center;font-size:17px;color:#000;">Hbl<span class="trv"></span></div><div class="t" style="left:1089.1px;top:61.9px;width:80px;text-align:center;font-size:17px;color:#000;">Hst<span class="trv"></span></div><div class="t" style="left:1160.6px;top:61.9px;width:80px;text-align:center;font-size:17px;color:#000;">Hcl<span class="trv"></span></div><div class="t" style="left:1232.2px;top:61.9px;width:80px;text-align:center;font-size:17px;color:#000;">Hgr<span class="trv"></span></div><div class="t" style="left:1303.8px;top:61.9px;width:80px;text-align:center;font-size:17px;color:#000;">Stp<span class="trv"></span></div><div class="t" style="left:1375.4px;top:61.9px;width:80px;text-align:center;font-size:17px;color:#000;">Conf</div><div class="t" style="left:1446.9px;top:61.9px;width:80px;text-align:center;font-size:17px;color:#000;">Dock</div><div class="t" style="left:1518.5px;top:61.9px;width:80px;text-align:center;font-size:17px;color:#000;">Out<span class="trv"></span></div><svg class="abs" style="left:830px;top:63px" width="26" height="26"><path d="M9.3,4.8 H15.7 L20.6,9.7 V16 L15.7,20.9 H9.3 L4.4,16 V9.7 Z" fill="#e4e4ff" stroke="#000080" stroke-width="2"/><path d="M12.5,8 L17.3,12.8 L12.5,17.6 L7.7,12.8 Z" fill="none" stroke="#000080" stroke-width="0.9" stroke-dasharray="1.5,1.5"/><path d="M12.5,2 V24 M1.6,12.8 H23.7" stroke="#000050" stroke-width="2"/></svg><div class="abs" style="left:1664px;top:303px;width:141px;height:708px;border-radius:8px;background:#f0f0f0;overflow:hidden"><div class="abs" style="left:106px;top:13px;width:35px;height:34px;background:#d9d9d9"></div></div><div class="t" style="left:1677.0px;top:319.9px;font-size:19.0px;color:#858585;">Build En...</div><div class="t" style="left:1781px;top:324px;font-size:16px;color:#f4f4f4">&#215;</div><div class="bb" style="left:1664px;top:352.50px;width:71px;height:43.94px"></div><div class="bb" style="left:1735px;top:352.50px;height:43.94px"></div><div class="bb" style="left:1664px;top:396.44px;width:71px;height:43.94px"></div><div class="bb" style="left:1735px;top:396.44px;height:43.94px"></div><div class="bb" style="left:1664px;top:440.38px;width:71px;height:43.94px"></div><div class="bb" style="left:1735px;top:440.38px;height:43.94px"></div><div class="bb" style="left:1664px;top:484.32px;width:71px;height:43.94px"></div><div class="bb" style="left:1735px;top:484.32px;height:43.94px"></div><div class="bb" style="left:1664px;top:528.26px;width:71px;height:43.94px"></div><div class="bb" style="left:1735px;top:528.26px;height:43.94px"></div><div class="bb" style="left:1664px;top:572.20px;width:71px;height:43.94px"></div><div class="bb" style="left:1735px;top:572.20px;height:43.94px"></div><div class="bb" style="left:1664px;top:616.14px;width:71px;height:43.94px"></div><div class="bb" style="left:1735px;top:616.14px;height:43.94px"></div><div class="bb" style="left:1664px;top:660.08px;width:71px;height:43.94px"></div><div class="bb" style="left:1735px;top:660.08px;height:43.94px"></div><div class="bb" style="left:1664px;top:704.02px;width:71px;height:43.94px"></div><div class="bb" style="left:1735px;top:704.02px;height:43.94px"></div><div class="bb" style="left:1664px;top:747.96px;width:71px;height:43.94px"></div><div class="bb" style="left:1735px;top:747.96px;height:43.94px"></div><div class="bb" style="left:1735px;top:791.90px;height:43.94px"></div><div class="bb" style="left:1735px;top:835.84px;height:43.94px"></div><div class="bb" style="left:1735px;top:879.78px;height:43.94px"></div><div class="bb" style="left:1735px;top:923.72px;height:43.94px"></div><div class="bb" style="left:1735px;top:967.66px;height:43.94px"></div><div class="abs" style="left:1834px;top:388px;width:70px;height:312px;border-radius:8px;background:#f2f2f2;overflow:hidden;box-shadow:0 1px 3px rgba(0,0,0,0.3)"><div class="bb" style="left:0;top:52.00px;width:70px;height:43.7px"></div><div class="bb" style="left:0;top:95.70px;width:70px;height:43.7px"></div><div class="bb" style="left:0;top:139.40px;width:70px;height:43.7px"></div><div class="bb" style="left:0;top:183.10px;width:70px;height:43.7px"></div><div class="bb" style="left:0;top:226.80px;width:70px;height:43.7px"></div><div class="bb" style="left:0;top:270.50px;width:70px;height:43.7px"></div></div><div class="t" style="left:1847.0px;top:405.0px;font-size:19.5px;color:#858585;">CAD</div><div class="abs" style="left:1847px;top:443px;width:42px;height:36px;background:#0000f0"></div><div class="t" style="left:1827.0px;top:447.6px;width:80px;text-align:center;font-size:17px;color:#f0f000">Bld<span class="tri" style="border-top-color:#f0f000"></span></div><div class="t" style="left:1827.0px;top:491.3px;width:80px;text-align:center;font-size:17px;color:#000">Snp<span class="tri" style="border-top-color:#000"></span></div><div class="t" style="left:1827.0px;top:535.0px;width:80px;text-align:center;font-size:17px;color:#000">Edi<span class="tri" style="border-top-color:#000"></span></div><div class="t" style="left:1827.0px;top:578.7px;width:80px;text-align:center;font-size:17px;color:#000">Grd<span class="tri" style="border-top-color:#000"></span></div><div class="t" style="left:1830.5px;top:622.4px;width:80px;text-align:center;font-size:17px;color:#000">Conf</div><div class="t" style="left:1830.5px;top:666.1px;width:80px;text-align:center;font-size:17px;color:#000">Dock</div><svg width="1920" height="1072" style="position:absolute;left:0;top:0"><g transform="translate(0,-0.50)"><g transform="translate(1685,363)"><path d="M1.5,11 L8,5 L13,4.5 L12,8 L19,2 L26,3 L20,9 Z" fill="#fff" stroke="#000" stroke-width="1.6"/><path d="M1.5,11 L12,9 L13,10 L20,9 V20 L13,18 L12,19 L1.5,22 Z" fill="#10f010" stroke="#000" stroke-width="1.8"/><path d="M20,9 L26.5,3 V13 L20,20 Z" fill="#108010" stroke="#000" stroke-width="1.6"/></g></g><g transform="translate(0,-0.56)"><g transform="translate(1685,406)"><rect width="27" height="25" fill="#0000f0"/><path d="M3,6 Q8,9 13,6 Q18,3 24,7 V19 Q18,16 13,19 Q8,22 3,19 Z" fill="#ff1010" stroke="#ffb040" stroke-width="1.5"/></g></g><g transform="translate(0,-0.62)"><g transform="translate(1685,449)"><path d="M3,24 Q3,16 9,16 Q15,16 15,24 Z M15,10 Q15,2 21,2 Q27,2 27,10 Z" fill="#10f010" stroke="#000" stroke-width="1.5"/><path d="M12,24 L25,10" stroke="#000" stroke-width="1"/></g></g><g transform="translate(0,-0.68)"><g transform="translate(1689,493)"><path d="M1,7 L17,2 V10 L1,15 Z" fill="#0000f0"/><path d="M1,15 L17,10 V16 L1,21 Z" fill="#10e010"/><path d="M1,21 L17,16 V22 L1,27 Z" fill="#f01010"/><path d="M1,7 L17,2 V22 L1,27 Z" fill="none" stroke="#000" stroke-width="1.5"/></g></g><g transform="translate(0,-0.74)"><g transform="translate(1687,543)"><path d="M1,11 L8,7 L16,4 L22,1 V7 L15,10 L8,13 L1,16 Z" fill="#10c010" stroke="#000" stroke-width="1.5"/><path d="M1,10 L8,7 V13 L1,16 Z" fill="#0010f0"/><path d="M15,4 L22,1 V7 L15,10 Z" fill="#f01010"/></g></g><g transform="translate(0,-0.80)"><path d="M1686,588 L1692,584 L1697,583 L1708,581 Q1711,583 1711,590 L1712,597 Q1710,602 1707,600 L1704,594 L1703,589 L1702,596 Q1703,603 1699,604 Q1695,604 1696,598 L1696,590 L1694,594 Q1692,602 1690,599 L1691,591 L1686,593" fill="none" stroke="#209020" stroke-width="1.5"/></g><g transform="translate(0,-0.86)"><text x="1685.5" y="642" font-family="Liberation Sans" font-size="13" fill="#111" stroke="#111" stroke-width="0.35" textLength="27" lengthAdjust="spacingAndGlyphs">[xvz]</text></g><g transform="translate(0,-0.92)"><g transform="translate(1686,675)"><path d="M1,6 L7,1 H17 L11,6 Z" fill="#10f010" stroke="#000" stroke-width="1.5"/><path d="M1,16 L7,11 H17 L11,16 Z" fill="#10f010" stroke="#000" stroke-width="1.5"/><path d="M1,6 V16 M11,6 V16 M17,1 V11" stroke="#555" stroke-width="1"/><path d="M22,12 V2 M19,5 L22,1 L25,5" stroke="#000" stroke-width="1.6" fill="none"/></g></g><g transform="translate(0,-0.98)"><g transform="translate(1688,719)"><path d="M8,6 Q11,2 15,2 Q21,2 20,8 L18,12" fill="none" stroke="#000090" stroke-width="2.6"/><path d="M1,1 L9,9 H1 Z" fill="#000090"/></g></g><g transform="translate(0,-1.04)"><g transform="translate(1688,763)"><path d="M3,12 Q0,5 6,3 Q11,1 15,6" fill="none" stroke="#000090" stroke-width="2.6"/><path d="M21,3 L21,12 H12 Z" fill="#000090"/></g></g><g transform="translate(0,-0.50)"><rect x="1763.5" y="369.5" width="11" height="11" fill="none" stroke="#f8f860" stroke-width="3"/></g><g transform="translate(0,-0.56)"><rect x="1763.5" y="413.5" width="11" height="10.5" rx="2" fill="#f4f4d0" stroke="#f4f460" stroke-width="3"/><path d="M1756,431 L1781.5,406" stroke="#303040" stroke-width="1.8" stroke-dasharray="4,1.5"/></g><g transform="translate(0,-0.62)"><rect x="1756.5" y="450.5" width="27" height="25" fill="#0000f0"/><rect x="1763" y="457" width="12" height="11" fill="#000050"/><rect x="1767" y="460.5" width="5.5" height="5" fill="#ffff50"/><path d="M1757,474 L1765,467 M1774,467 L1782,474" stroke="#d0d0ff" stroke-width="1.4" stroke-dasharray="2.5,1.5"/></g><g transform="translate(0,-0.68)"><rect x="1763.5" y="500.5" width="11" height="11" rx="2" fill="#f4f4d0" stroke="#f4f460" stroke-width="3"/><path d="M1758,517 L1780,498" stroke="#303040" stroke-width="1.8" stroke-dasharray="4,1.5"/><rect x="1756" y="513.5" width="6" height="6" fill="#000"/><rect x="1776.5" y="495.5" width="6" height="6" fill="#000"/></g><g transform="translate(0,-0.74)"><rect x="1763" y="545" width="11" height="11" fill="none" stroke="#f8f860" stroke-width="3"/><path d="M1757,562 L1781,538" stroke="#202020" stroke-width="1.5" stroke-dasharray="2,3"/></g><g transform="translate(0,-0.80)"><rect x="1763" y="590" width="11" height="11" fill="none" stroke="#f8f860" stroke-width="3"/><path d="M1758,584 L1781,607" stroke="#202020" stroke-width="1.5"/><path d="M1758,607 L1781,584" stroke="#202020" stroke-width="1.5" stroke-dasharray="2,3"/></g><g transform="translate(0,-0.86)"><path d="M1761,649 Q1762,636 1777,629" fill="none" stroke="#000" stroke-width="1.6"/><rect x="1756" y="644" width="9" height="9" fill="#ffff40"/><rect x="1758" y="646" width="5" height="5" fill="#000"/><rect x="1760" y="629" width="9" height="9" fill="#ffff40"/><rect x="1762" y="631" width="5" height="5" fill="#000"/><rect x="1773" y="624" width="9" height="9" fill="#ffff40"/><rect x="1775" y="626" width="5" height="5" fill="#000"/></g><g transform="translate(0,-0.92)"><rect x="1755" y="686" width="10" height="10" fill="#ffff40"/><rect x="1774" y="669" width="10" height="10" fill="#ffff40"/><rect x="1760" y="671" width="9" height="9" fill="#ffff40"/><rect x="1769" y="684" width="9" height="9" fill="#ffff40"/><ellipse cx="1769" cy="682" rx="14" ry="5.5" transform="rotate(-42 1769 682)" fill="none" stroke="#000" stroke-width="1.4"/><rect x="1757" y="688" width="6" height="6" fill="#000"/><rect x="1776" y="671" width="6" height="6" fill="#000"/><rect x="1762" y="673" width="5" height="5" fill="#000"/><rect x="1771" y="686" width="5" height="5" fill="#000"/></g><g transform="translate(0,-0.98)"><rect x="1755" y="708" width="29" height="37" fill="#0000f0"/><svg x="1755" y="708" width="29" height="37"><text x="1.5" y="20" font-family="Liberation Sans" font-size="17.5" fill="#e8e830">Win</text></svg></g><g transform="translate(0,-1.04)"><rect x="1759.2" y="758.2" width="5.5" height="5.5" fill="#000"/><rect x="1759.2" y="767.2" width="5.5" height="5.5" fill="#000"/><rect x="1759.2" y="775.8" width="5.5" height="5.5" fill="#000"/><rect x="1767.8" y="758.2" width="5.5" height="5.5" fill="#000"/><rect x="1765" y="764" width="11" height="11" fill="#ffff70"/><rect x="1768" y="767" width="5" height="5" fill="#d00000"/><rect x="1767.8" y="775.8" width="5.5" height="5.5" fill="#000"/><rect x="1776.2" y="758.2" width="5.5" height="5.5" fill="#000"/><rect x="1776.2" y="767.2" width="5.5" height="5.5" fill="#000"/><rect x="1776.2" y="775.8" width="5.5" height="5.5" fill="#000"/></g><g transform="translate(0,-1.10)"><circle cx="1770.5" cy="814" r="6.5" fill="#ffff70"/><rect x="1768" y="811.5" width="5" height="5" fill="#d00000"/><rect x="1778.2" y="811.2" width="5.5" height="5.5" fill="#000"/><rect x="1775.2" y="818.7" width="5.5" height="5.5" fill="#000"/><rect x="1767.8" y="821.8" width="5.5" height="5.5" fill="#000"/><rect x="1760.3" y="818.7" width="5.5" height="5.5" fill="#000"/><rect x="1757.2" y="811.2" width="5.5" height="5.5" fill="#000"/><rect x="1760.3" y="803.8" width="5.5" height="5.5" fill="#000"/><rect x="1767.8" y="800.8" width="5.5" height="5.5" fill="#000"/><rect x="1775.2" y="803.8" width="5.5" height="5.5" fill="#000"/></g><g transform="translate(0,-1.16)"><rect x="1762" y="851" width="13" height="13" fill="#f8f880"/><path d="M1757,867 L1780,844" stroke="#303040" stroke-width="1.8" stroke-dasharray="4,1.5"/><rect x="1766" y="855" width="5" height="5" fill="#d00000"/><rect x="1755" y="864" width="6" height="6" fill="#000"/><rect x="1777" y="841" width="6" height="6" fill="#000"/><text x="1774" y="870" font-family="Liberation Sans" font-size="12" fill="#2020c0">X</text></g><g transform="translate(0,-1.22)"><rect x="1762" y="895" width="13" height="13" fill="#f8f880"/><path d="M1757,911 L1780,888" stroke="#303040" stroke-width="1.8" stroke-dasharray="4,1.5"/><rect x="1766" y="899" width="5" height="5" fill="#d00000"/><rect x="1755" y="908" width="6" height="6" fill="#000"/><rect x="1777" y="885" width="6" height="6" fill="#000"/><text x="1774" y="914" font-family="Liberation Sans" font-size="12" fill="#2020c0">Y</text></g><g transform="translate(0,-1.28)"><rect x="1762" y="939" width="13" height="13" fill="#f8f880"/><path d="M1757,955 L1780,932" stroke="#303040" stroke-width="1.8" stroke-dasharray="4,1.5"/><rect x="1766" y="943" width="5" height="5" fill="#d00000"/><rect x="1755" y="952" width="6" height="6" fill="#000"/><rect x="1777" y="929" width="6" height="6" fill="#000"/><text x="1774" y="958" font-family="Liberation Sans" font-size="12" fill="#2020c0">Z</text></g><g transform="translate(0,-1.34)"><g stroke="#000" stroke-width="1.5" fill="none"><path d="M1764,1000 V979 M1761,983 L1764,979 L1767,983 M1764,993 H1780 M1776,990 L1780,993 L1776,996 M1764,993 L1759,999 M1759,995 V999 H1763"/></g><rect x="1762" y="990" width="4" height="5" fill="#d00000"/></g></svg></body></html>
